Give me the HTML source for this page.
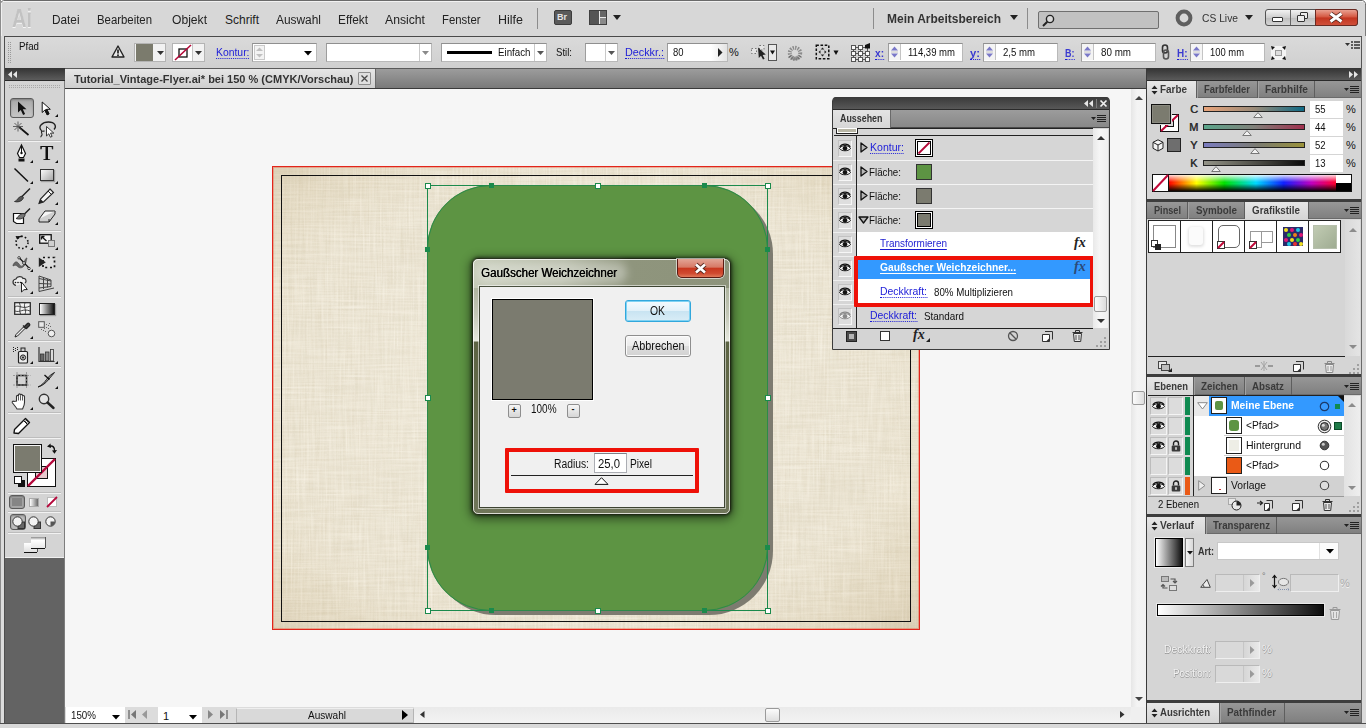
<!DOCTYPE html>
<html lang="de">
<head>
<meta charset="utf-8">
<title>Tutorial_Vintage-Flyer.ai</title>
<style>
*{box-sizing:border-box;margin:0;padding:0}
html,body{width:1366px;height:728px;overflow:hidden;background:#d6d6d6;font-family:"Liberation Sans","DejaVu Sans",sans-serif;font-size:11px;color:#111}
.a{position:absolute}
.t{position:absolute;white-space:nowrap;line-height:1}
.lnk{color:#1c1cd8;border-bottom:1px dotted #1c1cd8}
svg{position:absolute;overflow:visible}
/* ---------- frame ---------- */
#menubar{left:0;top:0;width:1366px;height:36px;background:#d7d7d7}
#ctrlbar{left:5px;top:36px;width:1357px;height:33px;background:linear-gradient(#dadada,#cfcfcf);border-top:1px solid #4a4a4a;border-right:1px solid #555}
.menu{top:14px;font-size:12px;color:#222}
.inp{position:absolute;background:#fff;border:1px solid #b9b9b9;border-top-color:#8f8f8f;border-left-color:#9d9d9d}
/* ---------- canvas ---------- */
#canvas{left:65px;top:89px;width:1066px;height:618px;background:#f6f6f6}

.tabbar{position:absolute;left:1147px;width:214px;height:17px;background:linear-gradient(#979797,#808080);border-bottom:1px solid #6a6a6a}
.tab{position:absolute;top:0;height:17px;border-right:1px solid #5e5e5e;border-left:1px solid #a2a2a2}
.tab.on{background:linear-gradient(#e6e6e6,#d5d5d5);height:18px;border-left:none}
.tl{position:absolute;white-space:nowrap;line-height:1;font-size:11px;font-weight:bold;color:#3a3a3a;top:3px}
.pbody{position:absolute;left:1147px;width:214px;background:#d5d5d5}
.sep{position:absolute;left:1147px;width:214px;height:3px;background:#3d3d3d}
/* MORE-CSS */
</style>
</head>
<body>
<!-- window frame -->
<div class="a" id="menubar"></div>
<div class="a" id="ctrlbar"></div>
<div class="a" id="canvas"></div>

<!-- ===== menu bar ===== -->
<div class="t" style="transform:scaleX(0.769);transform-origin:0 50%;left:12px;top:5px;font-size:26px;font-weight:bold;color:#c2c2c2;text-shadow:0 1px 0 #f6f6f6">Ai</div>
<div class="t menu" style="transform:scaleX(0.982);transform-origin:0 50%;left:52px">Datei</div>
<div class="t menu" style="transform:scaleX(0.948);transform-origin:0 50%;left:97px">Bearbeiten</div>
<div class="t menu" style="transform:scaleX(1.009);transform-origin:0 50%;left:172px">Objekt</div>
<div class="t menu" style="transform:scaleX(1.000);transform-origin:0 50%;left:225px">Schrift</div>
<div class="t menu" style="transform:scaleX(0.992);transform-origin:0 50%;left:276px">Auswahl</div>
<div class="t menu" style="transform:scaleX(0.985);transform-origin:0 50%;left:338px">Effekt</div>
<div class="t menu" style="transform:scaleX(1.016);transform-origin:0 50%;left:385px">Ansicht</div>
<div class="t menu" style="transform:scaleX(0.946);transform-origin:0 50%;left:442px">Fenster</div>
<div class="t menu" style="transform:scaleX(1.041);transform-origin:0 50%;left:498px">Hilfe</div>
<div class="a" style="left:537px;top:8px;width:1px;height:21px;background:#8c8c8c"></div>
<div class="a" style="left:554px;top:10px;width:18px;height:15px;background:#5a5a5a;border:1px solid #3c3c3c;border-radius:2px"></div>
<div class="t" style="left:557px;top:13px;font-size:9px;font-weight:bold;color:#e4e4e4">Br</div>
<div class="a" style="left:589px;top:10px;width:18px;height:15px;background:#e9e9e9;border:1px solid #3f3f3f"></div>
<div class="a" style="left:590px;top:11px;width:9px;height:13px;background:#555"></div>
<div class="a" style="left:600px;top:11px;width:6px;height:6px;background:#666"></div>
<div class="a" style="left:600px;top:18px;width:6px;height:6px;background:#8a8a8a"></div>
<svg style="left:613px;top:15px" width="8" height="5"><path d="M0 0h8l-4 5z" fill="#222"/></svg>
<div class="a" style="left:873px;top:8px;width:1px;height:21px;background:#8c8c8c"></div>
<div class="t" style="transform:scaleX(0.921);transform-origin:0 50%;left:887px;top:12px;font-size:13px;font-weight:bold;color:#333">Mein Arbeitsbereich</div>
<svg style="left:1010px;top:15px" width="8" height="5"><path d="M0 0h8l-4 5z" fill="#222"/></svg>
<div class="a" style="left:1027px;top:8px;width:1px;height:21px;background:#8c8c8c"></div>
<div class="a" style="left:1038px;top:11px;width:121px;height:18px;background:#c1c1c1;border:1px solid #6f6f6f;border-radius:2px"></div>
<svg style="left:1042px;top:14px" width="14" height="13"><circle cx="8" cy="5" r="3.6" fill="#d8d8d8" stroke="#222" stroke-width="1.4"/><path d="M5.3 7.8L1 12" stroke="#222" stroke-width="2"/></svg>
<svg style="left:1175px;top:9px" width="18" height="18"><circle cx="9" cy="9" r="6.4" fill="none" stroke="#5e5e5e" stroke-width="4"/></svg>
<div class="t" style="transform:scaleX(0.894);transform-origin:0 50%;left:1202px;top:13px;font-size:11.500px;color:#333">CS Live</div>
<svg style="left:1245px;top:15px" width="8" height="5"><path d="M0 0h8l-4 5z" fill="#222"/></svg>
<!-- window buttons -->
<div class="a" style="left:1265px;top:9px;width:93px;height:17px;border:1px solid #525252;border-radius:3px;background:linear-gradient(#f2f2f2,#cfcfcf 50%,#bdbdbd 51%,#d4d4d4)"></div>
<div class="a" style="left:1290px;top:10px;width:1px;height:15px;background:#666"></div>
<div class="a" style="left:1315px;top:9px;width:43px;height:17px;border:1px solid #6a2a22;border-radius:0 3px 3px 0;background:linear-gradient(#e9a090,#d4553f 48%,#c23520 52%,#d0503a)"></div>
<div class="a" style="left:1272px;top:17px;width:11px;height:5px;background:#fff;border:1px solid #333;border-radius:1px"></div>
<div class="a" style="left:1300px;top:12px;width:8px;height:7px;border:1.5px solid #333;background:#eee;border-radius:1px"></div>
<div class="a" style="left:1297px;top:15px;width:8px;height:7px;border:1.5px solid #333;background:#eee;border-radius:1px"></div>
<svg style="left:1329px;top:12px" width="14" height="11"><path d="M1.5 1.5l11 8M12.5 1.5l-11 8" stroke="#4a2018" stroke-width="4.6"/><path d="M1.5 1.5l11 8M12.5 1.5l-11 8" stroke="#fff" stroke-width="2.8"/></svg>

<!-- ===== control bar ===== -->
<svg style="left:8px;top:42px" width="4" height="22"><g fill="#9a9a9a"><rect x="0" y="0" width="1" height="1"/><rect x="2" y="0" width="1" height="1"/><rect x="0" y="2" width="1" height="1"/><rect x="2" y="2" width="1" height="1"/><rect x="0" y="4" width="1" height="1"/><rect x="2" y="4" width="1" height="1"/><rect x="0" y="6" width="1" height="1"/><rect x="2" y="6" width="1" height="1"/><rect x="0" y="8" width="1" height="1"/><rect x="2" y="8" width="1" height="1"/><rect x="0" y="10" width="1" height="1"/><rect x="2" y="10" width="1" height="1"/><rect x="0" y="12" width="1" height="1"/><rect x="2" y="12" width="1" height="1"/><rect x="0" y="14" width="1" height="1"/><rect x="2" y="14" width="1" height="1"/><rect x="0" y="16" width="1" height="1"/><rect x="2" y="16" width="1" height="1"/><rect x="0" y="18" width="1" height="1"/><rect x="2" y="18" width="1" height="1"/><rect x="0" y="20" width="1" height="1"/><rect x="2" y="20" width="1" height="1"/></g></svg>
<div class="t" style="transform:scaleX(0.883);transform-origin:0 50%;left:19px;top:41px;font-size:11px">Pfad</div>
<svg style="left:111px;top:45px" width="14" height="13"><path d="M7 1L13 12H1z" fill="#e8e8e8" stroke="#222" stroke-width="1.4" stroke-linejoin="round"/><path d="M7 4.5v4" stroke="#111" stroke-width="1.6"/><circle cx="7" cy="10.2" r=".9" fill="#111"/></svg>
<div class="a" style="left:134px;top:43px;width:32px;height:19px;background:#f2f2f2;border:1px solid #b4b4b4"></div>
<div class="a" style="left:136px;top:44px;width:17px;height:17px;background:#7b7b6d"></div>
<svg style="left:157px;top:51px" width="7" height="4"><path d="M0 0h7l-3.500 4z" fill="#333"/></svg>
<div class="a" style="left:172px;top:43px;width:33px;height:19px;background:#f2f2f2;border:1px solid #b4b4b4"></div>
<div class="a" style="left:173px;top:44px;width:19px;height:17px;background:#fff"></div>
<svg style="left:174px;top:44px" width="18" height="17"><rect x="5" y="5" width="8" height="8" fill="none" stroke="#111" stroke-width="1.3"/><path d="M1 16L17 1" stroke="#b30838" stroke-width="1.6"/></svg>
<div class="a" style="left:192px;top:44px;width:1px;height:17px;background:#c4c4c4"></div>
<svg style="left:195px;top:51px" width="7" height="4"><path d="M0 0h7l-3.500 4z" fill="#333"/></svg>
<div class="t lnk" style="transform:scaleX(0.944);transform-origin:0 50%;left:216px;top:47px;font-size:11px">Kontur:</div>
<div class="inp" style="left:252px;top:43px;width:65px;height:19px"></div>
<div class="a" style="left:254px;top:45px;width:11px;height:15px;border:1px solid #c9c9c9;background:#f3f3f3"></div>
<svg style="left:256px;top:47px" width="7" height="11"><path d="M0 4h7l-3.500-3.500z" fill="#c0c0c0"/><path d="M0 7h7l-3.500 3.500z" fill="#c0c0c0"/></svg>
<svg style="left:304px;top:51px" width="8" height="5"><path d="M0 0h8l-4 4.500z" fill="#000"/></svg>
<div class="inp" style="left:326px;top:43px;width:106px;height:19px"></div>
<div class="a" style="left:419px;top:44px;width:1px;height:17px;background:#c9c9c9"></div>
<svg style="left:422px;top:51px" width="7" height="4"><path d="M0 0h7l-3.500 4z" fill="#8a8a8a"/></svg>
<div class="inp" style="left:441px;top:43px;width:106px;height:19px"></div>
<div class="a" style="left:447px;top:51px;width:45px;height:3px;background:#000"></div>
<div class="t" style="transform:scaleX(0.885);transform-origin:0 50%;left:498px;top:47px;font-size:11px">Einfach</div>
<div class="a" style="left:534px;top:44px;width:1px;height:17px;background:#c9c9c9"></div>
<svg style="left:537px;top:51px" width="7" height="4"><path d="M0 0h7l-3.500 4z" fill="#555"/></svg>
<div class="t" style="transform:scaleX(0.872);transform-origin:0 50%;left:556px;top:47px;font-size:11px">Stil:</div>
<div class="inp" style="left:585px;top:43px;width:33px;height:19px"></div>
<div class="a" style="left:605px;top:44px;width:1px;height:17px;background:#c9c9c9"></div>
<svg style="left:608px;top:51px" width="7" height="4"><path d="M0 0h7l-3.500 4z" fill="#555"/></svg>
<div class="t lnk" style="transform:scaleX(0.982);transform-origin:0 50%;left:625px;top:47px;font-size:11px">Deckkr.:</div>
<div class="inp" style="left:667px;top:43px;width:61px;height:19px"></div>
<div class="t" style="transform:scaleX(0.857);transform-origin:0 50%;left:673px;top:47px;font-size:11px">80</div>
<div class="a" style="left:711px;top:44px;width:16px;height:17px;background:linear-gradient(90deg,#fff,#e4e4e4)"></div>
<svg style="left:718px;top:48px" width="5" height="9"><path d="M0 0v9l4.500-4.500z" fill="#222"/></svg>
<div class="t" style="left:729px;top:47px;font-size:11px">%</div>
<!-- select similar icon -->
<svg style="left:750px;top:44px" width="28" height="18"><rect x="1.500" y="4.500" width="5" height="5" fill="#e4e4e4" stroke="#777" stroke-dasharray="1.500 2" /><rect x="9.500" y="1.500" width="4.500" height="4.500" fill="#e4e4e4" stroke="#777" stroke-dasharray="1.500 2"/><path d="M8 3.500l.8 10.500 2.200-2.300 2 3.800 1.600-.8-2-3.800 3.200-.3z" fill="#222"/><rect x="18.500" y=".5" width="8" height="16" fill="#e9e9e9" stroke="#555"/><path d="M20 6.500h5l-2.500 4z" fill="#111"/></svg>
<svg style="left:787px;top:45px" width="16" height="16"><circle cx="8" cy="8" r="5.200" fill="none" stroke="#8a8a8a" stroke-width="4" stroke-dasharray="1.300 1.100"/><circle cx="8" cy="8" r="3" fill="#d9d9d9"/><path d="M2.500 11a6.500 6.500 0 0 0 11 0" fill="none" stroke="#5a5a5a" stroke-width="3.500" stroke-dasharray="1.300 1.100" opacity=".7"/></svg>
<svg style="left:815px;top:44px" width="26" height="18"><rect x="1.300" y="1.300" width="12.500" height="13.500" fill="#d4d4d4" stroke="#111" stroke-width="1.500" stroke-dasharray="2.600 1.600"/><path d="M7.500 3.500l1.800 2h-3.600zM7.500 12.500l1.800-2h-3.600zM3.500 8l2-1.800v3.600zM11.500 8l-2-1.800v3.600z" fill="#222"/><path d="M18.500 6.500h5l-2.500 4.500z" fill="#111"/></svg>
<svg style="left:851px;top:43px" width="20" height="19"><path d="M2.500 4.500h14M2.500 10.500h14M2.500 16.500h14M2.500 4.500v12M9.500 4.500v12M16.500 4.500v12" stroke="#555" stroke-width="1" fill="none"/><g fill="#fafafa" stroke="#555" stroke-width="1"><rect x=".5" y="2.500" width="4" height="4"/><rect x="7.500" y="2.500" width="4" height="4"/><rect x=".5" y="8.500" width="4" height="4"/><rect x="7.500" y="8.500" width="4" height="4"/><rect x="14.500" y="8.500" width="4" height="4"/><rect x=".5" y="14.500" width="4" height="4"/><rect x="7.500" y="14.500" width="4" height="4"/><rect x="14.500" y="14.500" width="4" height="4"/></g><path d="M14 2l5-2v5.500h-5z" fill="#111"/></svg>
<div class="t lnk" style="transform:scaleX(0.920);transform-origin:0 50%;left:875px;top:48px;font-size:11px;font-weight:bold;color:#3a3ad0">x:</div>
<div class="inp" style="left:888px;top:43px;width:75px;height:19px"></div>
<div class="a" style="left:889px;top:44px;width:12px;height:16px;border-right:1px solid #c4c4c4;background:#f4f4f4"></div>
<svg style="left:891px;top:46px" width="8" height="12"><path d="M0 4.5h7l-3.5-4z" fill="#7a78c8"/><path d="M0 7.5h7l-3.5 4z" fill="#7a78c8"/><path d="M0 6h7" stroke="#aaa" stroke-width=".6"/></svg>
<div class="t" style="transform:scaleX(0.867);transform-origin:0 50%;left:908px;top:47px;font-size:11px">114,39 mm</div>
<div class="t lnk" style="transform:scaleX(1.022);transform-origin:0 50%;left:970px;top:48px;font-size:11px;font-weight:bold;color:#3a3ad0">y:</div>
<div class="inp" style="left:983px;top:43px;width:75px;height:19px"></div>
<div class="a" style="left:984px;top:44px;width:12px;height:16px;border-right:1px solid #c4c4c4;background:#f4f4f4"></div>
<svg style="left:986px;top:46px" width="8" height="12"><path d="M0 4.5h7l-3.5-4z" fill="#7a78c8"/><path d="M0 7.5h7l-3.5 4z" fill="#7a78c8"/><path d="M0 6h7" stroke="#aaa" stroke-width=".6"/></svg>
<div class="t" style="transform:scaleX(0.872);transform-origin:0 50%;left:1003px;top:47px;font-size:11px">2,5 mm</div>
<div class="t lnk" style="transform:scaleX(0.818);transform-origin:0 50%;left:1065px;top:48px;font-size:11px;font-weight:bold;color:#3a3ad0">B:</div>
<div class="inp" style="left:1081px;top:43px;width:75px;height:19px"></div>
<div class="a" style="left:1082px;top:44px;width:12px;height:16px;border-right:1px solid #c4c4c4;background:#f4f4f4"></div>
<svg style="left:1084px;top:46px" width="8" height="12"><path d="M0 4.5h7l-3.5-4z" fill="#7a78c8"/><path d="M0 7.5h7l-3.5 4z" fill="#7a78c8"/><path d="M0 6h7" stroke="#aaa" stroke-width=".6"/></svg>
<div class="t" style="transform:scaleX(0.892);transform-origin:0 50%;left:1101px;top:47px;font-size:11px">80 mm</div>
<svg style="left:1161px;top:44px" width="9" height="16"><rect x="1.500" y="1" width="5" height="8" rx="2.500" fill="none" stroke="#333" stroke-width="1.600"/><rect x="2.500" y="6" width="5" height="9" rx="2.500" fill="none" stroke="#555" stroke-width="1.600"/></svg>
<div class="t lnk" style="transform:scaleX(0.904);transform-origin:0 50%;left:1177px;top:48px;font-size:11px;font-weight:bold;color:#3a3ad0">H:</div>
<div class="inp" style="left:1190px;top:43px;width:75px;height:19px"></div>
<div class="a" style="left:1191px;top:44px;width:12px;height:16px;border-right:1px solid #c4c4c4;background:#f4f4f4"></div>
<svg style="left:1193px;top:46px" width="8" height="12"><path d="M0 4.5h7l-3.5-4z" fill="#7a78c8"/><path d="M0 7.5h7l-3.5 4z" fill="#7a78c8"/><path d="M0 6h7" stroke="#aaa" stroke-width=".6"/></svg>
<div class="t" style="transform:scaleX(0.855);transform-origin:0 50%;left:1210px;top:47px;font-size:11px">100 mm</div>
<svg style="left:1271px;top:46px" width="15" height="14"><rect x="0" y="0" width="15" height="14" fill="#f3f3f3"/><rect x="4.500" y="4.500" width="6" height="5" fill="#ddd" stroke="#999"/><path d="M0 0l4 1-3 3zM15 0l-4 1 3 3zM0 14l4-1-3-3zM15 14l-4-1 3-3z" fill="#111"/></svg>
<svg style="left:1345px;top:41px" width="15" height="8"><path d="M0 2h5l-2.500 3z" fill="#333"/><path d="M6 1h2M6 4h2M6 7h2" stroke="#333" stroke-width="1.400"/><path d="M9 1h6M9 4h6M9 7h6" stroke="#333" stroke-width="1.400"/></svg>

<!-- ===== window frame edges ===== -->
<div class="a" style="left:0;top:0;width:1366px;height:1px;background:#6a6a6a"></div>
<div class="a" style="left:1px;top:1px;width:1364px;height:1px;background:#f2f2f2"></div>
<div class="a" style="left:1px;top:1px;width:1px;height:727px;background:#f0f0f0"></div>
<svg style="left:0;top:0" width="6" height="6"><path d="M0 0h6v1h-2l-2 1-1 2v2h-1z" fill="#fff"/><path d="M.5 6v-2.500l1-2 2-1h2.500" fill="none" stroke="#6a6a6a"/></svg>
<svg style="left:1360px;top:0" width="6" height="6"><path d="M6 0h-6v1h2l2 1 1 2v2h1z" fill="#fff"/><path d="M5.500 6v-2.500l-1-2-2-1h-2.500" fill="none" stroke="#6a6a6a"/></svg>
<div class="a" style="left:1365px;top:5px;width:1px;height:723px;background:#7a7a7a"></div>
<div class="a" style="left:0;top:0;width:1px;height:728px;background:#8c8c8c"></div>
<div class="a" style="left:1px;top:36px;width:3px;height:692px;background:#dcdcdc"></div>
<div class="a" style="left:4px;top:36px;width:1px;height:688px;background:#4e4e4e"></div>
<div class="a" style="left:1362px;top:36px;width:4px;height:692px;background:#dadada"></div>
<div class="a" style="left:0;top:723px;width:1366px;height:1px;background:#4e4e4e"></div>
<div class="a" style="left:0;top:724px;width:1366px;height:4px;background:#d9d9d9"></div>
<!-- ===== document tab bar ===== -->
<div class="a" style="left:65px;top:68px;width:1081px;height:21px;background:linear-gradient(#9c9c9c,#7a7a7a);border-top:1px solid #5a5a5a;border-bottom:1px solid #3a3a3a"></div>
<div class="a" style="left:65px;top:69px;width:311px;height:19px;background:linear-gradient(#e6e6e6,#cfcfcf);border-right:1px solid #6a6a6a"></div>
<div class="t" style="transform:scaleX(0.957);transform-origin:0 50%;left:74px;top:74px;font-size:11.500px;font-weight:bold;color:#333">Tutorial_Vintage-Flyer.ai* bei 150 % (CMYK/Vorschau)</div>
<div class="a" style="left:358px;top:72px;width:13px;height:13px;border:1px solid #8e8e8e;background:#e0e0e0;border-radius:1px"></div>
<svg style="left:361px;top:75px" width="7" height="7"><path d="M.5.5l6 6M6.500.5l-6 6" stroke="#4a4a4a" stroke-width="1.300"/></svg>
<!-- ===== tools panel shell ===== -->
<div class="a" style="left:5px;top:68px;width:60px;height:13px;background:linear-gradient(#333,#5c5c5c);border-bottom:1px solid #2a2a2a"></div>
<svg style="left:8px;top:71px" width="9" height="7"><path d="M4 0v7l-4-3.500zM9 0v7l-4-3.500z" fill="#e6e6e6"/></svg>
<div class="a" style="left:5px;top:81px;width:60px;height:477px;background:#d4d4d4;border-bottom:1px solid #f0f0f0"></div>
<div class="a" style="left:5px;top:558px;width:60px;height:165px;background:#636363"></div>
<div class="a" style="left:64px;top:81px;width:1px;height:642px;background:#7d7d7d"></div>
<!-- ===== status bar ===== -->
<div class="a" style="left:65px;top:707px;width:1081px;height:16px;background:#dcdcdc"></div>
<div class="a" style="left:66px;top:707px;width:59px;height:16px;background:#fff"></div>
<div class="t" style="transform:scaleX(0.888);transform-origin:0 50%;left:71px;top:710px;font-size:11px">150%</div>
<svg style="left:112px;top:715px" width="8" height="5"><path d="M0 0h8l-4 4.500z" fill="#000"/></svg>
<svg style="left:128px;top:710px" width="9" height="9"><path d="M1 0v9" stroke="#777" stroke-width="1.500"/><path d="M8 0v9l-5-4.500z" fill="#777"/></svg>
<svg style="left:142px;top:710px" width="6" height="9"><path d="M5 0v9l-5-4.500z" fill="#999"/></svg>
<div class="a" style="left:158px;top:707px;width:44px;height:16px;background:#fff"></div>
<div class="t" style="left:163px;top:711px;font-size:11px">1</div>
<svg style="left:189px;top:715px" width="8" height="5"><path d="M0 0h8l-4 4.500z" fill="#000"/></svg>
<svg style="left:208px;top:710px" width="6" height="9"><path d="M0 0v9l5-4.500z" fill="#888"/></svg>
<svg style="left:220px;top:710px" width="9" height="9"><path d="M7 0v9" stroke="#777" stroke-width="1.500"/><path d="M0 0v9l5-4.500z" fill="#777"/></svg>
<div class="a" style="left:236px;top:708px;width:178px;height:15px;background:#d9d9d9;border:1px solid #b5b5b5;border-top-color:#efefef"></div>
<div class="t" style="transform:scaleX(0.914);transform-origin:0 50%;left:308px;top:710px;font-size:11px">Auswahl</div>
<svg style="left:402px;top:710px" width="6" height="10"><path d="M0 0v10l6-5z" fill="#000"/></svg>
<div class="a" style="left:414px;top:707px;width:717px;height:16px;background:linear-gradient(#eaeaea,#f3f3f3)"></div>
<svg style="left:420px;top:711px" width="5" height="7"><path d="M4.500 0v7l-4.500-3.500z" fill="#333"/></svg>
<svg style="left:1120px;top:711px" width="5" height="7"><path d="M0 0v7l4.500-3.500z" fill="#333"/></svg>
<div class="a" style="left:765px;top:708px;width:15px;height:14px;background:linear-gradient(#fbfbfb,#dedede);border:1px solid #9a9a9a;border-radius:2px"></div>
<!-- vertical scrollbar -->
<div class="a" style="left:1131px;top:89px;width:15px;height:618px;background:linear-gradient(90deg,#e6e6e6,#f4f4f4 40%,#f1f1f1)"></div>
<svg style="left:1135px;top:96px" width="8" height="4"><path d="M0 4h8l-4-4z" fill="#444"/></svg>
<svg style="left:1135px;top:697px" width="8" height="4"><path d="M0 0h8l-4 4z" fill="#444"/></svg>
<div class="a" style="left:1132px;top:391px;width:13px;height:14px;background:linear-gradient(90deg,#fbfbfb,#dedede);border:1px solid #9a9a9a;border-radius:2px"></div>
<div class="a" style="left:1131px;top:707px;width:15px;height:16px;background:#efefef"></div>
<div class="a" style="left:1146px;top:68px;width:1px;height:655px;background:#3a3a3a"></div>

<!-- ===== artboard ===== -->
<div class="a" id="art" style="left:272px;top:166px;width:648px;height:464px;border:1px solid #e2251b;background:#f2ebdb;overflow:hidden">
<svg style="left:0;top:0" width="646" height="462"><defs>
<filter id="lin" x="0" y="0" width="100%" height="100%"><feTurbulence type="fractalNoise" baseFrequency="0.02 0.55" numOctaves="2" seed="3" result="h"/><feTurbulence type="fractalNoise" baseFrequency="0.55 0.02" numOctaves="2" seed="7" result="v"/><feBlend in="h" in2="v" mode="multiply"/><feColorMatrix type="matrix" values="0 0 0 0 0.45  0 0 0 0 0.38  0 0 0 0 0.22  1.6 1.6 0 0 -0.62"/></filter>
<filter id="lin2" x="0" y="0" width="100%" height="100%"><feTurbulence type="fractalNoise" baseFrequency="0.03 0.5" numOctaves="1" seed="11" result="h"/><feTurbulence type="fractalNoise" baseFrequency="0.5 0.03" numOctaves="1" seed="5" result="v"/><feBlend in="h" in2="v" mode="screen"/><feColorMatrix type="matrix" values="0 0 0 0 1  0 0 0 0 0.99  0 0 0 0 0.93  1.5 1.5 0 0 -1.25"/></filter>
<radialGradient id="vig" cx="48%" cy="50%" r="72%"><stop offset="0" stop-color="#fffdf4" stop-opacity=".25"/><stop offset=".6" stop-color="#fffdf4" stop-opacity="0"/><stop offset=".8" stop-color="#b89c62" stop-opacity=".08"/><stop offset="1" stop-color="#a88c5a" stop-opacity=".24"/></radialGradient></defs>
<rect width="646" height="462" filter="url(#lin)" opacity=".24"/><rect width="646" height="462" filter="url(#lin2)" opacity=".3"/><rect width="646" height="462" fill="url(#vig)"/></svg></div>
<div class="a" style="left:273px;top:167px;width:646px;height:462px;border:1px solid rgba(235,70,40,.35)"></div>
<div class="a" style="left:281px;top:175px;width:630px;height:447px;border:1px solid #111"></div>
<!-- drop shadow + green shape -->
<div class="a" style="left:432px;top:190px;width:341px;height:425px;border-radius:64px;background:#7d7b70"></div>
<div class="a" style="left:427px;top:185px;width:341px;height:426px;border-radius:64px;background:#5d9443"></div>
<div class="a" style="left:427px;top:185px;width:341px;height:426px;border:1px solid #1b8a4c"></div>
<div class="a" style="left:427px;top:185px;width:341px;height:426px;border-radius:64px;border:1px solid #2c8a4a"></div>
<div class="a" style="left:425px;top:183px;width:6px;height:6px;background:#fff;border:1px solid #1b8a4c"></div><div class="a" style="left:595px;top:183px;width:6px;height:6px;background:#fff;border:1px solid #1b8a4c"></div><div class="a" style="left:765px;top:183px;width:6px;height:6px;background:#fff;border:1px solid #1b8a4c"></div><div class="a" style="left:425px;top:395px;width:6px;height:6px;background:#fff;border:1px solid #1b8a4c"></div><div class="a" style="left:765px;top:395px;width:6px;height:6px;background:#fff;border:1px solid #1b8a4c"></div><div class="a" style="left:425px;top:608px;width:6px;height:6px;background:#fff;border:1px solid #1b8a4c"></div><div class="a" style="left:595px;top:608px;width:6px;height:6px;background:#fff;border:1px solid #1b8a4c"></div><div class="a" style="left:765px;top:608px;width:6px;height:6px;background:#fff;border:1px solid #1b8a4c"></div><div class="a" style="left:489px;top:183px;width:5px;height:5px;background:#1b8a4c"></div><div class="a" style="left:702px;top:183px;width:5px;height:5px;background:#1b8a4c"></div><div class="a" style="left:425px;top:247px;width:5px;height:5px;background:#1b8a4c"></div><div class="a" style="left:765px;top:247px;width:5px;height:5px;background:#1b8a4c"></div><div class="a" style="left:425px;top:545px;width:5px;height:5px;background:#1b8a4c"></div><div class="a" style="left:765px;top:545px;width:5px;height:5px;background:#1b8a4c"></div><div class="a" style="left:489px;top:608px;width:5px;height:5px;background:#1b8a4c"></div><div class="a" style="left:702px;top:608px;width:5px;height:5px;background:#1b8a4c"></div>

<!-- ===== Gaussian blur dialog ===== -->
<div class="a" style="left:472px;top:258px;width:259px;height:257px;border-radius:7px;box-shadow:0 2px 10px 3px rgba(0,0,0,.42),0 0 3px 1px rgba(0,0,0,.5)"></div>
<div class="a" style="left:472px;top:258px;width:259px;height:257px;border-radius:6px;border:1px solid #1f2a14;background:linear-gradient(100deg,#c6cbb9 0%,#b6bba8 35%,#8f957d 60%,#8d937b 100%) 0 0/100% 29px no-repeat,linear-gradient(#aeb49f 0,#aeb49f 29px,#c3c7b7 55px,#e6e8de 82px,#5c6343 83px,#666c4c 60%,#70765a 100%)"></div>
<div class="a" style="left:473px;top:259px;width:257px;height:255px;border-radius:5px;border:1px solid rgba(255,255,255,.75)"></div>
<div class="a" style="left:479px;top:286px;width:246px;height:222px;border:1px solid #3d4432;background:#f0f0f0;box-shadow:0 0 0 1px rgba(255,255,255,.55)"></div>
<div class="a" style="left:477px;top:263px;width:150px;height:20px;border-radius:9px;background:rgba(255,255,255,.32);filter:blur(4px)"></div>
<div class="t" style="transform:scaleX(0.963);transform-origin:0 50%;left:481px;top:267px;font-size:12px;color:#000;text-shadow:.3px 0 0 #000">Gaußscher Weichzeichner</div>
<div class="a" style="left:677px;top:259px;width:47px;height:19px;border:1px solid #5a1a12;border-top:none;border-radius:0 0 5px 5px;box-shadow:0 0 0 1px rgba(255,255,255,.6);background:linear-gradient(#e3a596 0,#d77a66 45%,#c8381f 52%,#d04a30 80%,#e07858 100%)"></div>
<svg style="left:694px;top:263px" width="13" height="11"><path d="M2 1.500l9 8M11 1.500l-9 8" stroke="#5a2a20" stroke-width="4.400"/><path d="M2 1.500l9 8M11 1.500l-9 8" stroke="#fff" stroke-width="2.600"/></svg>
<div class="a" style="left:491px;top:298px;width:103px;height:103px;border:1px solid #fff"></div>
<div class="a" style="left:492px;top:299px;width:101px;height:101px;border:1px solid #000;background:#7b7b6f"></div>
<div class="a" style="left:625px;top:300px;width:66px;height:22px;border:1px solid #31a7dc;border-radius:3px;background:linear-gradient(#f4fbfe 0,#e2f1f9 48%,#c9e4f2 52%,#d9edf7 100%);box-shadow:inset 0 0 0 1px #7fd2f3"></div>
<div class="t" style="transform:scaleX(0.865);transform-origin:0 50%;left:650px;top:305px;font-size:12px">OK</div>
<div class="a" style="left:625px;top:335px;width:66px;height:22px;border:1px solid #8e8e8e;border-radius:3px;background:linear-gradient(#f6f6f6 0,#ececec 48%,#dddddd 52%,#d2d2d2 100%);box-shadow:inset 0 0 0 1px #fcfcfc"></div>
<div class="t" style="transform:scaleX(0.904);transform-origin:0 50%;left:632px;top:340px;font-size:12px">Abbrechen</div>
<div class="a" style="left:508px;top:404px;width:13px;height:14px;border:1px solid #8e8e8e;border-radius:2px;background:linear-gradient(#f6f6f6,#d6d6d6)"></div>
<div class="t" style="left:511.500px;top:406px;font-size:9px;font-weight:bold">+</div>
<div class="t" style="transform:scaleX(0.831);transform-origin:0 50%;left:531px;top:403px;font-size:12px">100%</div>
<div class="a" style="left:567px;top:404px;width:13px;height:14px;border:1px solid #8e8e8e;border-radius:2px;background:linear-gradient(#f6f6f6,#d6d6d6)"></div>
<div class="t" style="left:571.500px;top:405px;font-size:9px;font-weight:bold">-</div>
<div class="a" style="left:505px;top:448px;width:194px;height:45px;border:4px solid #ee1108;border-radius:1px"></div>
<div class="t" style="transform:scaleX(0.860);transform-origin:0 50%;left:554px;top:458px;font-size:12px">Radius:</div>
<div class="a" style="left:594px;top:453px;width:33px;height:20px;border:1px solid #abadb3;border-top-color:#7d8088;background:#fff"></div>
<div class="t" style="transform:scaleX(0.942);transform-origin:0 50%;left:598px;top:458px;font-size:12px">25,0</div>
<div class="t" style="transform:scaleX(0.846);transform-origin:0 50%;left:630px;top:458px;font-size:12px">Pixel</div>
<div class="a" style="left:511px;top:475px;width:182px;height:1px;background:#222"></div>
<svg style="left:594px;top:477px" width="15" height="8"><path d="M7.500.7L14 7.400H1z" fill="#fff" stroke="#111" stroke-width="1"/></svg>

<!-- ===== Aussehen panel ===== -->
<div class="a" style="left:832px;top:97px;width:278px;height:253px;background:#d5d5d5;border:1px solid #3c3c3c;border-radius:4px 4px 0 0"></div>
<div class="a" style="left:833px;top:97px;width:276px;height:13px;background:linear-gradient(#3a3a3a,#585858);border-radius:3px 3px 0 0;border-bottom:1px solid #2b2b2b"></div>
<svg style="left:1084px;top:100px" width="9" height="7"><path d="M4 0v7l-4-3.500zM9 0v7l-4-3.500z" fill="#e6e6e6"/></svg>
<div class="a" style="left:1096px;top:99px;width:1px;height:9px;background:#7d7d7d"></div>
<svg style="left:1100px;top:100px" width="7" height="7"><path d="M.5.5l6 6M6.500.5l-6 6" stroke="#f0f0f0" stroke-width="1.700"/></svg>
<div class="a" style="left:833px;top:110px;width:276px;height:18px;background:linear-gradient(#9c9c9c,#888888);border-bottom:1px solid #4a4a4a"></div>
<div class="a" style="left:833px;top:110px;width:58px;height:18px;background:linear-gradient(#e4e4e4,#d6d6d6);border-right:1px solid #6a6a6a"></div>
<div class="t" style="transform:scaleX(0.808);transform-origin:0 50%;left:840px;top:113px;font-size:11px;font-weight:bold;color:#333">Aussehen</div>
<svg style="left:1091px;top:114px" width="15" height="9"><path d="M0 3h5l-2.500 3z" fill="#222"/><path d="M6 1.500h9M6 3.500h9M6 5.500h9M6 7.500h9" stroke="#222" stroke-width="1"/></svg>
<!-- list -->
<div class="a" style="left:833px;top:128px;width:260px;height:200px;background:#d6d6d6"></div>
<div class="a" style="left:833px;top:128px;width:260px;height:1px;background:#222"></div>
<div class="a" style="left:836px;top:128px;width:22px;height:6px;background:#fff;border:1px solid #222;border-top:none"></div>
<div class="a" style="left:838px;top:129px;width:18px;height:3px;background:#b9b7a6"></div>
<div class="a" style="left:834px;top:135px;width:259px;height:1px;background:#222"></div>
<div class="a" style="left:857px;top:160px;width:236px;height:1px;background:#f4f4f4"></div>
<div class="a" style="left:857px;top:184px;width:236px;height:1px;background:#f4f4f4"></div>
<div class="a" style="left:857px;top:208px;width:236px;height:1px;background:#f4f4f4"></div>
<div class="a" style="left:857px;top:232px;width:236px;height:72px;background:#fff"></div>
<div class="a" style="left:857px;top:304px;width:236px;height:24px;background:#d6d6d6"></div>
<div class="a" style="left:833px;top:160px;width:23px;height:1px;background:#eee"></div>
<div class="a" style="left:833px;top:184px;width:23px;height:1px;background:#eee"></div>
<div class="a" style="left:833px;top:208px;width:23px;height:1px;background:#eee"></div>
<div class="a" style="left:833px;top:232px;width:23px;height:1px;background:#eee"></div>
<div class="a" style="left:833px;top:256px;width:23px;height:1px;background:#eee"></div>
<div class="a" style="left:833px;top:280px;width:23px;height:1px;background:#eee"></div>
<div class="a" style="left:833px;top:304px;width:23px;height:1px;background:#eee"></div>
<div class="a" style="left:856px;top:135px;width:1px;height:193px;background:#222"></div>
<div class="a" style="left:838px;top:140px;width:14px;height:17px;background:#dedede;border:1px solid #c2c2c2;border-right-color:#f6f6f6;border-bottom-color:#f6f6f6"></div>
<svg style="left:839px;top:143px" width="12" height="10"><path d="M.5 5.500C2.500 1.500 9.500 1.500 11.500 5.500C9.500 8.500 2.500 8.500 .5 5.500z" fill="#f2f2f2" stroke="#111" stroke-width="1"/><circle cx="6" cy="5.200" r="2.300" fill="#111"/><path d="M.8 3.800C3 .3 9 .3 11.200 3.800" fill="none" stroke="#111" stroke-width="1.300"/></svg><div class="a" style="left:838px;top:164px;width:14px;height:17px;background:#dedede;border:1px solid #c2c2c2;border-right-color:#f6f6f6;border-bottom-color:#f6f6f6"></div>
<svg style="left:839px;top:167px" width="12" height="10"><path d="M.5 5.500C2.500 1.500 9.500 1.500 11.500 5.500C9.500 8.500 2.500 8.500 .5 5.500z" fill="#f2f2f2" stroke="#111" stroke-width="1"/><circle cx="6" cy="5.200" r="2.300" fill="#111"/><path d="M.8 3.800C3 .3 9 .3 11.200 3.800" fill="none" stroke="#111" stroke-width="1.300"/></svg><div class="a" style="left:838px;top:188px;width:14px;height:17px;background:#dedede;border:1px solid #c2c2c2;border-right-color:#f6f6f6;border-bottom-color:#f6f6f6"></div>
<svg style="left:839px;top:191px" width="12" height="10"><path d="M.5 5.500C2.500 1.500 9.500 1.500 11.500 5.500C9.500 8.500 2.500 8.500 .5 5.500z" fill="#f2f2f2" stroke="#111" stroke-width="1"/><circle cx="6" cy="5.200" r="2.300" fill="#111"/><path d="M.8 3.800C3 .3 9 .3 11.200 3.800" fill="none" stroke="#111" stroke-width="1.300"/></svg><div class="a" style="left:838px;top:212px;width:14px;height:17px;background:#dedede;border:1px solid #c2c2c2;border-right-color:#f6f6f6;border-bottom-color:#f6f6f6"></div>
<svg style="left:839px;top:215px" width="12" height="10"><path d="M.5 5.500C2.500 1.500 9.500 1.500 11.500 5.500C9.500 8.500 2.500 8.500 .5 5.500z" fill="#f2f2f2" stroke="#111" stroke-width="1"/><circle cx="6" cy="5.200" r="2.300" fill="#111"/><path d="M.8 3.800C3 .3 9 .3 11.200 3.800" fill="none" stroke="#111" stroke-width="1.300"/></svg><div class="a" style="left:838px;top:236px;width:14px;height:17px;background:#dedede;border:1px solid #c2c2c2;border-right-color:#f6f6f6;border-bottom-color:#f6f6f6"></div>
<svg style="left:839px;top:239px" width="12" height="10"><path d="M.5 5.500C2.500 1.500 9.500 1.500 11.500 5.500C9.500 8.500 2.500 8.500 .5 5.500z" fill="#f2f2f2" stroke="#111" stroke-width="1"/><circle cx="6" cy="5.200" r="2.300" fill="#111"/><path d="M.8 3.800C3 .3 9 .3 11.200 3.800" fill="none" stroke="#111" stroke-width="1.300"/></svg><div class="a" style="left:838px;top:260px;width:14px;height:17px;background:#dedede;border:1px solid #c2c2c2;border-right-color:#f6f6f6;border-bottom-color:#f6f6f6"></div>
<svg style="left:839px;top:263px" width="12" height="10"><path d="M.5 5.500C2.500 1.500 9.500 1.500 11.500 5.500C9.500 8.500 2.500 8.500 .5 5.500z" fill="#f2f2f2" stroke="#111" stroke-width="1"/><circle cx="6" cy="5.200" r="2.300" fill="#111"/><path d="M.8 3.800C3 .3 9 .3 11.200 3.800" fill="none" stroke="#111" stroke-width="1.300"/></svg><div class="a" style="left:838px;top:284px;width:14px;height:17px;background:#dedede;border:1px solid #c2c2c2;border-right-color:#f6f6f6;border-bottom-color:#f6f6f6"></div>
<svg style="left:839px;top:287px" width="12" height="10"><path d="M.5 5.500C2.500 1.500 9.500 1.500 11.500 5.500C9.500 8.500 2.500 8.500 .5 5.500z" fill="#f2f2f2" stroke="#111" stroke-width="1"/><circle cx="6" cy="5.200" r="2.300" fill="#111"/><path d="M.8 3.800C3 .3 9 .3 11.200 3.800" fill="none" stroke="#111" stroke-width="1.300"/></svg><div class="a" style="left:838px;top:308px;width:14px;height:17px;background:#dedede;border:1px solid #c2c2c2;border-right-color:#f6f6f6;border-bottom-color:#f6f6f6"></div>
<svg style="left:839px;top:311px" width="12" height="10"><path d="M.5 5.500C2.500 1.500 9.500 1.500 11.500 5.500C9.500 8.500 2.500 8.500 .5 5.500z" fill="#f2f2f2" stroke="#8a8a8a" stroke-width="1"/><circle cx="6" cy="5.200" r="2.300" fill="#8a8a8a"/><path d="M.8 3.800C3 .3 9 .3 11.200 3.800" fill="none" stroke="#8a8a8a" stroke-width="1.300"/></svg>
<!-- row 1 Kontur -->
<svg style="left:860px;top:142px" width="8" height="11"><path d="M1 1v9l6-4.500z" fill="#b8b8b8" stroke="#111" stroke-width="1.300" stroke-linejoin="round"/></svg>
<div class="t lnk" style="transform:scaleX(0.959);transform-origin:0 50%;left:870px;top:142px;font-size:11px">Kontur:</div>
<div class="a" style="left:915px;top:139px;width:18px;height:18px;border:1px solid #000;background:#fff"></div>
<div class="a" style="left:917px;top:141px;width:14px;height:14px;border:1px solid #000;background:#fff"></div>
<svg style="left:918px;top:142px" width="12" height="12"><path d="M.5 11.500L11.500.5" stroke="#b30838" stroke-width="1.800"/></svg>
<!-- row 2-4 Flaeche -->
<svg style="left:860px;top:166px" width="8" height="11"><path d="M1 1v9l6-4.500z" fill="#b8b8b8" stroke="#111" stroke-width="1.300" stroke-linejoin="round"/></svg>
<div class="t" style="transform:scaleX(0.887);transform-origin:0 50%;left:869px;top:167px;font-size:11px">Fläche:</div>
<div class="a" style="left:916px;top:164px;width:16px;height:16px;border:1px solid #333;background:#5d9443"></div>
<svg style="left:860px;top:190px" width="8" height="11"><path d="M1 1v9l6-4.500z" fill="#b8b8b8" stroke="#111" stroke-width="1.300" stroke-linejoin="round"/></svg>
<div class="t" style="transform:scaleX(0.887);transform-origin:0 50%;left:869px;top:191px;font-size:11px">Fläche:</div>
<div class="a" style="left:916px;top:188px;width:16px;height:16px;border:1px solid #333;background:#7b7b6f"></div>
<svg style="left:858px;top:216px" width="11" height="8"><path d="M1 1h9l-4.500 6z" fill="#b8b8b8" stroke="#111" stroke-width="1.300" stroke-linejoin="round"/></svg>
<div class="t" style="transform:scaleX(0.887);transform-origin:0 50%;left:869px;top:215px;font-size:11px">Fläche:</div>
<div class="a" style="left:915px;top:211px;width:18px;height:18px;border:1px solid #000;background:#fff"></div>
<div class="a" style="left:917px;top:213px;width:14px;height:14px;border:1px solid #000;background:#7b7b6f"></div>
<!-- sub rows -->
<div class="t" style="transform:scaleX(0.903);transform-origin:0 50%;left:880px;top:238px;font-size:11px;color:#1c1cd0;border-bottom:1px solid #1c1cd0">Transformieren</div>
<div class="t" style="left:1074px;top:236px;font-family:'Liberation Serif',serif;font-style:italic;font-weight:bold;font-size:14px;color:#222">fx</div>
<div class="a" style="left:857px;top:259px;width:236px;height:20px;background:#3399ff"></div>
<div class="t" style="transform:scaleX(0.932);transform-origin:0 50%;left:880px;top:262px;font-size:11px;font-weight:bold;color:#fff;border-bottom:1px solid #fff">Gaußscher Weichzeichner...</div>
<div class="t" style="left:1074px;top:260px;font-family:'Liberation Serif',serif;font-style:italic;font-weight:bold;font-size:14px;color:#2b4a78">fx</div>
<div class="t lnk" style="transform:scaleX(0.949);transform-origin:0 50%;left:880px;top:286px;font-size:11px">Deckkraft:</div>
<div class="t" style="transform:scaleX(0.885);transform-origin:0 50%;left:934px;top:287px;font-size:11px">80% Multiplizieren</div>
<div class="t lnk" style="transform:scaleX(0.949);transform-origin:0 50%;left:870px;top:310px;font-size:11px">Deckkraft:</div>
<div class="t" style="transform:scaleX(0.896);transform-origin:0 50%;left:924px;top:311px;font-size:11px">Standard</div>
<!-- red highlight -->
<div class="a" style="left:854px;top:256px;width:240px;height:51px;border:4px solid #ee1108;border-radius:1px"></div>
<!-- scrollbar -->
<div class="a" style="left:1093px;top:129px;width:15px;height:199px;background:linear-gradient(90deg,#e9e9e9,#f6f6f6 45%,#f0f0f0)"></div>
<svg style="left:1097px;top:136px" width="8" height="4"><path d="M0 4h8l-4-4z" fill="#333"/></svg>
<svg style="left:1097px;top:319px" width="8" height="4"><path d="M0 0h8l-4 4z" fill="#333"/></svg>
<div class="a" style="left:1094px;top:296px;width:13px;height:16px;background:linear-gradient(90deg,#fbfbfb,#dcdcdc);border:1px solid #9a9a9a;border-radius:2px"></div>
<!-- footer -->
<div class="a" style="left:833px;top:328px;width:276px;height:21px;background:#d4d4d4"></div><div class="a" style="left:833px;top:328px;width:260px;height:1px;background:#222"></div>
<div class="a" style="left:846px;top:331px;width:11px;height:11px;background:#4a4a4a;border:1px solid #222"></div>
<div class="a" style="left:849px;top:334px;width:5px;height:5px;background:#b5b5b5"></div>
<div class="a" style="left:880px;top:331px;width:10px;height:10px;background:#fff;border:1px solid #333"></div>
<div class="t" style="left:913px;top:328px;font-family:'Liberation Serif',serif;font-style:italic;font-weight:bold;font-size:14px;color:#222">fx</div>
<svg style="left:926px;top:338px" width="4" height="4"><path d="M4 0v4h-4z" fill="#222"/></svg>
<svg style="left:1007px;top:330px" width="12" height="12"><circle cx="6" cy="6" r="4.500" fill="none" stroke="#555" stroke-width="1.300"/><path d="M2.800 2.800l6.400 6.400" stroke="#555" stroke-width="1.300"/></svg>
<svg style="left:1042px;top:331px" width="11" height="11"><path d="M.5 3.500h7v7h-7z" fill="#fff" stroke="#333"/><path d="M3 .5h7.500v8" fill="none" stroke="#333"/><path d="M4 10.500h3.500v-3.500z" fill="#333"/></svg>
<svg style="left:1072px;top:329px" width="11" height="13"><path d="M1.500 4.500h8l-.8 8h-6.400z" fill="#e8e8e8" stroke="#333"/><path d="M.5 3.500h10M3.500 3v-1.500h4v1.500" fill="none" stroke="#333"/><path d="M4 6v5M7 6v5" stroke="#555"/></svg>
<svg style="left:1096px;top:337px" width="11" height="11"><g fill="#a0a0a0"><rect x="8" y="0" width="2" height="2"/><rect x="4" y="4" width="2" height="2"/><rect x="8" y="4" width="2" height="2"/><rect x="0" y="8" width="2" height="2"/><rect x="4" y="8" width="2" height="2"/><rect x="8" y="8" width="2" height="2"/></g></svg>

<!-- ===== right dock ===== -->
<div class="a" style="left:1147px;top:68px;width:215px;height:13px;background:linear-gradient(#333,#5a5a5a);border-bottom:1px solid #2a2a2a"></div>
<svg style="left:1349px;top:71px" width="9" height="7"><path d="M0 0v7l4-3.500zM5 0v7l4-3.500z" fill="#e6e6e6"/></svg>
<div class="a" style="left:1361px;top:68px;width:1px;height:655px;background:#6a6a6a"></div>
<!-- Farbe -->
<div class="tabbar" style="top:81px"></div>
<div class="tab on" style="left:1147px;top:81px;width:50px"></div>
<div class="tab" style="left:1197px;top:81px;width:61px"></div>
<div class="tab" style="left:1258px;top:81px;width:57px"></div>
<svg style="left:1151px;top:85px" width="7" height="10"><path d="M.5 4l3-3.500 3 3.500zM.5 6l3 3.500 3-3.500z" fill="#222"/></svg>
<div class="t tl" style="transform:scaleX(0.901);transform-origin:0 50%;left:1160px;top:84px">Farbe</div>
<div class="t tl" style="transform:scaleX(0.855);transform-origin:0 50%;left:1204px;top:84px">Farbfelder</div>
<div class="t tl" style="transform:scaleX(0.926);transform-origin:0 50%;left:1265px;top:84px">Farbhilfe</div>
<svg style="left:1344px;top:85px" width="15" height="9"><path d="M0 3h5l-2.500 3z" fill="#222"/><path d="M6 1.500h9M6 3.500h9M6 5.500h9M6 7.500h9" stroke="#222" stroke-width="1"/></svg>
<div class="pbody" style="top:98px;height:101px"></div>
<div class="a" style="left:1160px;top:114px;width:19px;height:18px;border:1px solid #111;background:#fff"></div>
<svg style="left:1161px;top:115px" width="17" height="16"><rect x="4.500" y="4.500" width="8" height="7" fill="#d8d8d8" stroke="#111"/><path d="M0 16L17 0" stroke="#c00838" stroke-width="2"/></svg>
<div class="a" style="left:1151px;top:104px;width:20px;height:20px;border:1px solid #111;background:#7b7b6f;box-shadow:0 0 0 1px #d5d5d5,inset 0 0 0 1px #8a8a80"></div>
<svg style="left:1152px;top:139px" width="12" height="13"><path d="M6 .8L11 3.300v6L6 12 1 9.300v-6z" fill="#f4f4f4" stroke="#222" stroke-width="1"/><path d="M1 3.300L6 6l5-2.700M6 6v6" fill="none" stroke="#222" stroke-width="1"/></svg>
<div class="a" style="left:1167px;top:138px;width:14px;height:14px;border:1px solid #222;background:#6e6e6e"></div>
<div class="t" style="left:1190px;top:104px;font-size:11px;color:#2e2e2e;text-shadow:.4px 0 0 #2e2e2e">C</div>
<div class="t" style="left:1189px;top:122px;font-size:11px;color:#2e2e2e;text-shadow:.4px 0 0 #2e2e2e">M</div>
<div class="t" style="left:1190px;top:140px;font-size:11px;color:#2e2e2e;text-shadow:.4px 0 0 #2e2e2e">Y</div>
<div class="t" style="left:1190px;top:158px;font-size:11px;color:#2e2e2e;text-shadow:.4px 0 0 #2e2e2e">K</div>
<div class="a" style="left:1203px;top:106px;width:102px;height:6px;border:1px solid #222;background:linear-gradient(90deg,#e9a47a,#9a8a78 50%,#0f6a86)"></div>
<svg style="left:1253px;top:112px" width="10" height="6"><path d="M5 .6L9.300 5.500H.7z" fill="#f2f2f2" stroke="#777" stroke-width="1"/></svg>
<div class="a" style="left:1203px;top:124px;width:102px;height:6px;border:1px solid #222;background:linear-gradient(90deg,#5aa58a,#80807a 50%,#a0304e)"></div>
<svg style="left:1242px;top:130px" width="10" height="6"><path d="M5 .6L9.300 5.500H.7z" fill="#f2f2f2" stroke="#777" stroke-width="1"/></svg>
<div class="a" style="left:1203px;top:142px;width:102px;height:6px;border:1px solid #222;background:linear-gradient(90deg,#7a7cc0,#7c7c70 55%,#9a923a)"></div>
<svg style="left:1250px;top:148px" width="10" height="6"><path d="M5 .6L9.300 5.500H.7z" fill="#f2f2f2" stroke="#777" stroke-width="1"/></svg>
<div class="a" style="left:1203px;top:160px;width:102px;height:6px;border:1px solid #222;background:linear-gradient(90deg,#949488,#4a4a44 55%,#0a0a0a)"></div>
<svg style="left:1211px;top:166px" width="10" height="6"><path d="M5 .6L9.300 5.500H.7z" fill="#f2f2f2" stroke="#777" stroke-width="1"/></svg>
<div class="a" style="left:1310px;top:101px;width:33px;height:17px;background:#fff"></div>
<div class="a" style="left:1310px;top:119px;width:33px;height:17px;background:#fff"></div>
<div class="a" style="left:1310px;top:137px;width:33px;height:17px;background:#fff"></div>
<div class="a" style="left:1310px;top:155px;width:33px;height:17px;background:#fff"></div>
<div class="t" style="transform:scaleX(0.865);transform-origin:0 50%;left:1315px;top:104px;font-size:11px">55</div>
<div class="t" style="transform:scaleX(0.865);transform-origin:0 50%;left:1315px;top:122px;font-size:11px">44</div>
<div class="t" style="transform:scaleX(0.865);transform-origin:0 50%;left:1315px;top:140px;font-size:11px">52</div>
<div class="t" style="transform:scaleX(0.865);transform-origin:0 50%;left:1315px;top:158px;font-size:11px">13</div>
<div class="t" style="left:1346px;top:104px;font-size:11px">%</div>
<div class="t" style="left:1346px;top:122px;font-size:11px">%</div>
<div class="t" style="left:1346px;top:140px;font-size:11px">%</div>
<div class="t" style="left:1346px;top:158px;font-size:11px">%</div>
<div class="a" style="left:1152px;top:174px;width:200px;height:18px;border:1px solid #111;background:linear-gradient(rgba(255,255,255,.85) 0,rgba(255,255,255,0) 45%,rgba(0,0,0,0) 55%,rgba(0,0,0,.95) 100%),linear-gradient(90deg,#ff0000 0%,#ff0000 8%,#ffff00 22%,#00e000 36%,#00d8ff 52%,#1020ff 66%,#c000c0 80%,#ff0030 92%,#ff0000 100%)"></div>
<div class="a" style="left:1153px;top:175px;width:16px;height:16px;background:#fff;border-right:1px solid #111"></div>
<svg style="left:1153px;top:175px" width="15" height="16"><path d="M0 16L15 0" stroke="#c00838" stroke-width="2"/></svg>
<div class="a" style="left:1336px;top:175px;width:15px;height:8px;background:#fff"></div>
<div class="a" style="left:1336px;top:183px;width:15px;height:8px;background:#000"></div>
<div class="sep" style="top:199px"></div>
<!-- Grafikstile -->
<div class="tabbar" style="top:202px"></div>
<div class="tab" style="left:1147px;top:202px;width:41px;border-left:none"></div>
<div class="tab" style="left:1188px;top:202px;width:57px"></div>
<div class="tab on" style="left:1245px;top:202px;width:64px"></div>
<div class="t tl" style="transform:scaleX(0.833);transform-origin:0 50%;left:1154px;top:205px">Pinsel</div>
<div class="t tl" style="transform:scaleX(0.894);transform-origin:0 50%;left:1196px;top:205px">Symbole</div>
<div class="t tl" style="transform:scaleX(0.892);transform-origin:0 50%;left:1252px;top:205px">Grafikstile</div>
<svg style="left:1344px;top:206px" width="15" height="9"><path d="M0 3h5l-2.500 3z" fill="#222"/><path d="M6 1.500h9M6 3.500h9M6 5.500h9M6 7.500h9" stroke="#222" stroke-width="1"/></svg>
<div class="pbody" style="top:219px;height:155px"></div>
<div class="a" style="left:1148px;top:220px;width:193px;height:33px;background:#fff;border:1px solid #222"></div>
<div class="a" style="left:1180px;top:221px;width:1px;height:31px;background:#222"></div>
<div class="a" style="left:1212px;top:221px;width:1px;height:31px;background:#222"></div>
<div class="a" style="left:1244px;top:221px;width:1px;height:31px;background:#222"></div>
<div class="a" style="left:1276px;top:221px;width:1px;height:31px;background:#222"></div>
<div class="a" style="left:1308px;top:221px;width:1px;height:31px;background:#222"></div>
<div class="a" style="left:1153px;top:225px;width:23px;height:23px;border:1px solid #888;background:#fff"></div>
<div class="a" style="left:1151px;top:240px;width:7px;height:7px;border:1px solid #333;background:#fff"></div>
<div class="a" style="left:1155px;top:244px;width:6px;height:6px;background:#222"></div>
<div class="a" style="left:1189px;top:227px;width:14px;height:18px;border-radius:3px;background:#fbfbfb;box-shadow:0 1px 3px 1px rgba(0,0,0,.12)"></div>
<div class="a" style="left:1218px;top:225px;width:22px;height:23px;border:1px solid #666;border-radius:5px;background:#fff"></div>
<div class="a" style="left:1217px;top:241px;width:8px;height:8px;border:1px solid #333;background:#fff"></div>
<svg style="left:1218px;top:242px" width="6" height="6"><path d="M0 6L6 0" stroke="#c00838" stroke-width="2"/></svg>
<div class="a" style="left:1250px;top:231px;width:12px;height:17px;border:1px solid #999;background:#fff"></div>
<div class="a" style="left:1261px;top:231px;width:12px;height:12px;border:1px solid #999;background:#fff"></div>
<div class="a" style="left:1249px;top:241px;width:8px;height:8px;border:1px solid #333;background:#fff"></div>
<svg style="left:1250px;top:242px" width="6" height="6"><path d="M0 6L6 0" stroke="#c00838" stroke-width="2"/></svg>
<svg style="left:1283px;top:227px" width="20" height="19"><rect width="20" height="19" fill="#2a2a6a"/><g><circle cx="3" cy="3" r="2" fill="#f0e020"/><circle cx="9" cy="3" r="2" fill="#e01878"/><circle cx="15" cy="3" r="2" fill="#20c8e8"/><circle cx="6" cy="8" r="2" fill="#30d040"/><circle cx="12" cy="8" r="2" fill="#f08018"/><circle cx="18" cy="8" r="2" fill="#e01878"/><circle cx="3" cy="13" r="2" fill="#e01878"/><circle cx="9" cy="13" r="2" fill="#f0e020"/><circle cx="15" cy="13" r="2" fill="#30d040"/><circle cx="6" cy="17" r="2" fill="#20c8e8"/><circle cx="12" cy="17" r="2" fill="#e83030"/><circle cx="18" cy="17" r="2" fill="#f0e020"/></g></svg>
<div class="a" style="left:1313px;top:225px;width:24px;height:24px;background:linear-gradient(135deg,#c1cbb3,#9fac92);border:1px solid #b6bfac"></div>
<div class="a" style="left:1345px;top:220px;width:15px;height:136px;background:linear-gradient(90deg,#d9d9d9,#e4e4e4)"></div>
<svg style="left:1349px;top:228px" width="8" height="4"><path d="M0 4h8l-4-4z" fill="#8c8c8c"/></svg>
<svg style="left:1349px;top:345px" width="8" height="4"><path d="M0 0h8l-4 4z" fill="#8c8c8c"/></svg>
<div class="a" style="left:1148px;top:356px;width:197px;height:1px;background:#222"></div>
<svg style="left:1158px;top:361px" width="14" height="11"><rect x=".5" y=".5" width="8" height="7" fill="#e8e8e8" stroke="#444"/><rect x="3.500" y="3.500" width="8" height="6" fill="#bdbdbd" stroke="#444"/><path d="M10 11h4v-4z" fill="#222"/></svg>
<svg style="left:1255px;top:361px" width="18" height="10"><path d="M0 5h5M13 5h5" stroke="#9a9a9a" stroke-width="2"/><path d="M9 0v10M6 1l6 8M12 1l-6 8" stroke="#a5a5a5" stroke-width="1"/></svg>
<svg style="left:1293px;top:361px" width="11" height="11"><path d="M.5 3.500h7v7h-7z" fill="#fff" stroke="#333"/><path d="M3 .5h7.500v8" fill="none" stroke="#333"/><path d="M4 10.500h3.500v-3.500z" fill="#333"/></svg>
<svg style="left:1324px;top:360px" width="11" height="13"><path d="M1.500 4.500h8l-.8 8h-6.400z" fill="#ececec" stroke="#888"/><path d="M.5 3.500h10M3.500 3v-1.500h4v1.500" fill="none" stroke="#888"/><path d="M4 6v5M7 6v5" stroke="#999"/></svg>
<svg style="left:1349px;top:364px" width="11" height="11"><g fill="#a0a0a0"><rect x="8" y="0" width="2" height="2"/><rect x="4" y="4" width="2" height="2"/><rect x="8" y="4" width="2" height="2"/><rect x="0" y="8" width="2" height="2"/><rect x="4" y="8" width="2" height="2"/><rect x="8" y="8" width="2" height="2"/></g></svg>
<div class="sep" style="top:374px"></div>

<!-- Ebenen -->
<div class="tabbar" style="top:377px;height:18px"></div>
<div class="tab on" style="left:1147px;top:377px;width:47px;height:19px"></div>
<div class="tab" style="left:1194px;top:377px;width:51px;height:18px"></div>
<div class="tab" style="left:1245px;top:377px;width:47px;height:18px"></div>
<div class="t tl" style="transform:scaleX(0.856);transform-origin:0 50%;left:1154px;top:381px">Ebenen</div>
<div class="t tl" style="transform:scaleX(0.890);transform-origin:0 50%;left:1201px;top:381px">Zeichen</div>
<div class="t tl" style="transform:scaleX(0.887);transform-origin:0 50%;left:1252px;top:381px">Absatz</div>
<svg style="left:1344px;top:382px" width="15" height="9"><path d="M0 3h5l-2.500 3z" fill="#222"/><path d="M6 1.500h9M6 3.500h9M6 5.500h9M6 7.500h9" stroke="#222" stroke-width="1"/></svg>
<div class="pbody" style="top:395px;height:119px"></div>
<div class="a" style="left:1148px;top:395px;width:196px;height:1px;background:#222"></div>
<div class="a" style="left:1194px;top:396px;width:150px;height:80px;background:#fff"></div>
<div class="a" style="left:1194px;top:396px;width:15px;height:20px;background:#e9e9e9"></div>
<div class="a" style="left:1209px;top:396px;width:135px;height:20px;background:#3399ff"></div>
<div class="a" style="left:1194px;top:476px;width:150px;height:20px;background:#d2d2d2"></div>
<div class="a" style="left:1224px;top:435px;width:120px;height:1px;background:#cfcfcf"></div>
<div class="a" style="left:1224px;top:455px;width:120px;height:1px;background:#cfcfcf"></div>
<div class="a" style="left:1148px;top:496px;width:196px;height:1px;background:#9a9a9a"></div>
<div class="a" style="left:1193px;top:396px;width:1px;height:100px;background:#222"></div>
<div class="a" style="left:1150px;top:397px;width:17px;height:18px;background:#dcdcdc;border:1px solid #bcbcbc;border-right-color:#f4f4f4;border-bottom-color:#f4f4f4"></div><div class="a" style="left:1168px;top:397px;width:15px;height:18px;background:#dcdcdc;border:1px solid #bcbcbc;border-right-color:#f4f4f4;border-bottom-color:#f4f4f4"></div><div class="a" style="left:1185px;top:397px;width:5px;height:18px;background:#0f8a50"></div><svg style="left:1152px;top:401px" width="13" height="10"><path d="M.5 5.500C2.500 1.500 10.500 1.500 12.500 5.500C10.500 8.500 2.500 8.500 .5 5.500z" fill="#f2f2f2" stroke="#111" stroke-width="1"/><circle cx="6.500" cy="5.200" r="2.400" fill="#111"/><path d="M.8 3.800C3 .3 10 .3 12.200 3.800" fill="none" stroke="#111" stroke-width="1.300"/></svg><div class="a" style="left:1150px;top:417px;width:17px;height:18px;background:#dcdcdc;border:1px solid #bcbcbc;border-right-color:#f4f4f4;border-bottom-color:#f4f4f4"></div><div class="a" style="left:1168px;top:417px;width:15px;height:18px;background:#dcdcdc;border:1px solid #bcbcbc;border-right-color:#f4f4f4;border-bottom-color:#f4f4f4"></div><div class="a" style="left:1185px;top:417px;width:5px;height:18px;background:#0f8a50"></div><svg style="left:1152px;top:421px" width="13" height="10"><path d="M.5 5.500C2.500 1.500 10.500 1.500 12.500 5.500C10.500 8.500 2.500 8.500 .5 5.500z" fill="#f2f2f2" stroke="#111" stroke-width="1"/><circle cx="6.500" cy="5.200" r="2.400" fill="#111"/><path d="M.8 3.800C3 .3 10 .3 12.200 3.800" fill="none" stroke="#111" stroke-width="1.300"/></svg><div class="a" style="left:1150px;top:437px;width:17px;height:18px;background:#dcdcdc;border:1px solid #bcbcbc;border-right-color:#f4f4f4;border-bottom-color:#f4f4f4"></div><div class="a" style="left:1168px;top:437px;width:15px;height:18px;background:#dcdcdc;border:1px solid #bcbcbc;border-right-color:#f4f4f4;border-bottom-color:#f4f4f4"></div><div class="a" style="left:1185px;top:437px;width:5px;height:18px;background:#0f8a50"></div><svg style="left:1152px;top:441px" width="13" height="10"><path d="M.5 5.500C2.500 1.500 10.500 1.500 12.500 5.500C10.500 8.500 2.500 8.500 .5 5.500z" fill="#f2f2f2" stroke="#111" stroke-width="1"/><circle cx="6.500" cy="5.200" r="2.400" fill="#111"/><path d="M.8 3.800C3 .3 10 .3 12.200 3.800" fill="none" stroke="#111" stroke-width="1.300"/></svg><svg style="left:1171px;top:440px" width="10" height="12"><path d="M2.500 5.500v-2a2.500 2.500 0 0 1 5 0v2" fill="none" stroke="#222" stroke-width="1.400"/><rect x=".7" y="5.500" width="8.600" height="6" rx="1" fill="#3a3a3a"/><rect x="4.200" y="7.200" width="1.600" height="2.600" fill="#ddd"/></svg><div class="a" style="left:1150px;top:457px;width:17px;height:18px;background:#dcdcdc;border:1px solid #bcbcbc;border-right-color:#f4f4f4;border-bottom-color:#f4f4f4"></div><div class="a" style="left:1168px;top:457px;width:15px;height:18px;background:#dcdcdc;border:1px solid #bcbcbc;border-right-color:#f4f4f4;border-bottom-color:#f4f4f4"></div><div class="a" style="left:1185px;top:457px;width:5px;height:18px;background:#0f8a50"></div><div class="a" style="left:1150px;top:477px;width:17px;height:18px;background:#dcdcdc;border:1px solid #bcbcbc;border-right-color:#f4f4f4;border-bottom-color:#f4f4f4"></div><div class="a" style="left:1168px;top:477px;width:15px;height:18px;background:#dcdcdc;border:1px solid #bcbcbc;border-right-color:#f4f4f4;border-bottom-color:#f4f4f4"></div><div class="a" style="left:1185px;top:477px;width:5px;height:18px;background:#ea5a16"></div><svg style="left:1152px;top:481px" width="13" height="10"><path d="M.5 5.500C2.500 1.500 10.500 1.500 12.500 5.500C10.500 8.500 2.500 8.500 .5 5.500z" fill="#f2f2f2" stroke="#111" stroke-width="1"/><circle cx="6.500" cy="5.200" r="2.400" fill="#111"/><path d="M.8 3.800C3 .3 10 .3 12.200 3.800" fill="none" stroke="#111" stroke-width="1.300"/></svg><svg style="left:1171px;top:480px" width="10" height="12"><path d="M2.500 5.500v-2a2.500 2.500 0 0 1 5 0v2" fill="none" stroke="#222" stroke-width="1.400"/><rect x=".7" y="5.500" width="8.600" height="6" rx="1" fill="#3a3a3a"/><rect x="4.200" y="7.200" width="1.600" height="2.600" fill="#ddd"/></svg>
<svg style="left:1197px;top:402px" width="11" height="8"><path d="M.7.7h9.600L5.500 7z" fill="#fff" stroke="#8a8a8a" stroke-width="1"/></svg>
<div class="a" style="left:1211px;top:397px;width:16px;height:17px;background:#fff;border:1px solid #222"></div>
<div class="a" style="left:1215px;top:401px;width:8px;height:9px;background:#5d9443;border-radius:2px"></div>
<div class="t" style="transform:scaleX(0.937);transform-origin:0 50%;left:1231px;top:400px;font-size:11px;font-weight:bold;color:#fff">Meine Ebene</div>
<svg style="left:1319px;top:401px" width="11" height="11"><circle cx="5.500" cy="5.500" r="4.200" fill="#3a9cff" stroke="#1a3a6a" stroke-width="1.200"/></svg>
<div class="a" style="left:1335px;top:404px;width:5px;height:5px;background:#0f8a50"></div>
<svg style="left:1338px;top:396px" width="6" height="6"><path d="M0 0h6v6z" fill="#111"/></svg>
<div class="a" style="left:1226px;top:417px;width:16px;height:17px;background:#fff;border:1px solid #222"></div>
<div class="a" style="left:1229px;top:420px;width:10px;height:11px;background:#5d9443;border-radius:3px"></div>
<div class="t" style="transform:scaleX(0.930);transform-origin:0 50%;left:1246px;top:420px;font-size:11px">&lt;Pfad&gt;</div>
<svg style="left:1317px;top:419px" width="15" height="15"><circle cx="7.500" cy="7.500" r="6.300" fill="#eee" stroke="#333" stroke-width="1"/><circle cx="7.500" cy="7.500" r="4" fill="#777" stroke="#222" stroke-width="1"/><circle cx="6.300" cy="6.200" r="1.500" fill="#ddd"/></svg>
<div class="a" style="left:1334px;top:422px;width:8px;height:8px;background:#1f7a48;border:1px solid #0c4a28"></div>
<div class="a" style="left:1226px;top:437px;width:16px;height:17px;background:#eeeee6;border:1px solid #222;box-shadow:inset 0 0 0 2px #fff"></div>
<div class="t" style="transform:scaleX(0.957);transform-origin:0 50%;left:1246px;top:440px;font-size:11px">Hintergrund</div>
<svg style="left:1319px;top:440px" width="11" height="11"><circle cx="5.500" cy="5.500" r="4.300" fill="#555" stroke="#333" stroke-width="1"/><circle cx="4.300" cy="4.200" r="1.500" fill="#ccc"/></svg>
<div class="a" style="left:1226px;top:457px;width:16px;height:17px;background:#ea5a16;border:1px solid #222"></div>
<div class="t" style="transform:scaleX(0.930);transform-origin:0 50%;left:1246px;top:460px;font-size:11px">&lt;Pfad&gt;</div>
<svg style="left:1319px;top:460px" width="11" height="11"><circle cx="5.500" cy="5.500" r="4.200" fill="#fff" stroke="#333" stroke-width="1.100"/></svg>
<svg style="left:1198px;top:480px" width="8" height="11"><path d="M.7.7v9.600L7 5.500z" fill="#eee" stroke="#8a8a8a" stroke-width="1"/></svg>
<div class="a" style="left:1211px;top:477px;width:16px;height:17px;background:#fff;border:1px solid #222"></div>
<div class="a" style="left:1219px;top:489px;width:2px;height:1px;background:#c33"></div>
<div class="t" style="transform:scaleX(0.938);transform-origin:0 50%;left:1231px;top:480px;font-size:11px">Vorlage</div>
<svg style="left:1319px;top:480px" width="11" height="11"><circle cx="5.500" cy="5.500" r="4.200" fill="#ddd" stroke="#444" stroke-width="1.100"/></svg>
<div class="a" style="left:1344px;top:396px;width:16px;height:100px;background:linear-gradient(90deg,#e2e2e2,#eeeeee)"></div>
<svg style="left:1348px;top:403px" width="8" height="4"><path d="M0 4h8l-4-4z" fill="#8c8c8c"/></svg>
<svg style="left:1348px;top:486px" width="8" height="4"><path d="M0 0h8l-4 4z" fill="#8c8c8c"/></svg>
<div class="t" style="transform:scaleX(0.870);transform-origin:0 50%;left:1158px;top:499px;font-size:11px">2 Ebenen</div>
<svg style="left:1228px;top:498px" width="14" height="13"><rect x=".5" y=".5" width="7" height="6" fill="#e8e8e8" stroke="#777" stroke-dasharray="1 1"/><circle cx="8.500" cy="7.500" r="4.500" fill="#e8e8e8" stroke="#222"/><path d="M8.500 7.500v-4.500a4.500 4.500 0 0 1 4.500 4.500z" fill="#222"/></svg>
<svg style="left:1257px;top:499px" width="16" height="12"><path d="M0 4h5M3 2l2.500 2L3 6" fill="none" stroke="#222" stroke-width="1.200"/><path d="M7.500 4.500h5v7h-5z" fill="#fff" stroke="#333"/><path d="M9.500 1.500h6v8" fill="none" stroke="#333"/><path d="M9 11.500h3.500v-3.500z" fill="#333"/></svg>
<svg style="left:1292px;top:500px" width="11" height="11"><path d="M.5 3.500h7v7h-7z" fill="#fff" stroke="#333"/><path d="M3 .5h7.500v8" fill="none" stroke="#333"/><path d="M4 10.500h3.500v-3.500z" fill="#333"/></svg>
<svg style="left:1322px;top:498px" width="11" height="13"><path d="M1.500 4.500h8l-.8 8h-6.400z" fill="#e8e8e8" stroke="#333"/><path d="M.5 3.500h10M3.500 3v-1.500h4v1.500" fill="none" stroke="#333"/><path d="M4 6v5M7 6v5" stroke="#555"/></svg>
<svg style="left:1349px;top:502px" width="11" height="11"><g fill="#a0a0a0"><rect x="8" y="0" width="2" height="2"/><rect x="4" y="4" width="2" height="2"/><rect x="8" y="4" width="2" height="2"/><rect x="0" y="8" width="2" height="2"/><rect x="4" y="8" width="2" height="2"/><rect x="8" y="8" width="2" height="2"/></g></svg>
<div class="sep" style="top:514px"></div>


<!-- Verlauf -->
<div class="tabbar" style="top:517px"></div>
<div class="tab on" style="left:1147px;top:517px;width:59px"></div>
<div class="tab" style="left:1206px;top:517px;width:71px"></div>
<svg style="left:1151px;top:521px" width="7" height="10"><path d="M.5 4l3-3.500 3 3.500zM.5 6l3 3.500 3-3.500z" fill="#222"/></svg>
<div class="t tl" style="transform:scaleX(0.927);transform-origin:0 50%;left:1160px;top:520px">Verlauf</div>
<div class="t tl" style="transform:scaleX(0.879);transform-origin:0 50%;left:1213px;top:520px">Transparenz</div>
<svg style="left:1344px;top:521px" width="15" height="9"><path d="M0 3h5l-2.500 3z" fill="#222"/><path d="M6 1.500h9M6 3.500h9M6 5.500h9M6 7.500h9" stroke="#222" stroke-width="1"/></svg>
<div class="pbody" style="top:534px;height:166px"></div>
<div class="a" style="left:1155px;top:538px;width:28px;height:29px;border:1px solid #000;background:linear-gradient(90deg,#fff,#101010);box-shadow:0 0 0 1px #ededed"></div>
<div class="a" style="left:1185px;top:538px;width:9px;height:29px;border:1px solid #7d7d7d;background:linear-gradient(90deg,#f4f4f4,#d8d8d8)"></div>
<svg style="left:1187px;top:551px" width="6" height="4"><path d="M0 0h6l-3 3.500z" fill="#111"/></svg>
<div class="t" style="transform:scaleX(0.818);transform-origin:0 50%;left:1198px;top:546px;font-size:11px;font-weight:bold;color:#333">Art:</div>
<div class="a" style="left:1217px;top:542px;width:122px;height:18px;background:#fff;border:1px solid #c8c8c8"></div>
<div class="a" style="left:1319px;top:543px;width:19px;height:16px;background:#fbfbfb;border-left:1px solid #e2e2e2"></div>
<svg style="left:1326px;top:549px" width="8" height="5"><path d="M0 0h8l-4 4.500z" fill="#000"/></svg>
<svg style="left:1161px;top:576px" width="17" height="15"><rect x=".5" y=".5" width="7" height="5" fill="#bbb" stroke="#777"/><rect x="8.500" y="9.500" width="7" height="5" fill="#ddd" stroke="#777"/><path d="M9.500 3h4.500v3.500M12 5l2 2 2-2" fill="none" stroke="#555" stroke-width="1.200"/><path d="M6.500 12h-4.500v-3.500M0 10.500l2-2 2 2" fill="none" stroke="#555" stroke-width="1.200"/></svg>
<svg style="left:1200px;top:578px" width="11" height="10"><path d="M.7 9.300h9.600L7 1.500z" fill="#ececec" stroke="#444" stroke-width="1"/><path d="M4 9a4 4 0 0 0-1.200-2.500" fill="none" stroke="#444"/></svg>
<div class="a" style="left:1215px;top:574px;width:45px;height:18px;background:#d9d9d9;border:1px solid #b9b9b9;border-right-color:#efefef;border-bottom-color:#efefef"></div><div class="a" style="left:1243px;top:575px;width:16px;height:16px;background:linear-gradient(90deg,#d6d6d6,#e9e9e9);border-left:1px solid #c6c6c6"></div><svg style="left:1250px;top:579px" width="5" height="8"><path d="M0 0v8l4.500-4z" fill="#9a9a9a"/></svg>
<div class="t" style="left:1262px;top:572px;font-size:9px;color:#777">°</div>
<svg style="left:1272px;top:575px" width="18" height="17"><path d="M2.500 1v11M.5 3l2-2.500 2 2.500M.5 10l2 2.500 2-2.500" fill="none" stroke="#111" stroke-width="1.200"/><ellipse cx="11.500" cy="7" rx="5" ry="3.600" fill="#e6e6e6" stroke="#777"/><path d="M6 14.500h11M7.500 13l-1.500 1.500 1.500 1.500M15.500 13l1.500 1.500-1.500 1.500" fill="none" stroke="#7a8aa8" stroke-width=".9" stroke-dasharray="1 1"/></svg>
<div class="a" style="left:1290px;top:574px;width:49px;height:18px;background:#d9d9d9;border:1px solid #b9b9b9;border-right-color:#efefef;border-bottom-color:#efefef"></div>
<div class="t" style="left:1340px;top:578px;font-size:11px;color:#aaa;text-shadow:0 1px 0 #f4f4f4">%</div>
<div class="a" style="left:1157px;top:604px;width:167px;height:12px;border:1px solid #000;background:linear-gradient(90deg,#fff,#0c0c0c);box-shadow:0 0 0 1px #e9e9e9"></div>
<svg style="left:1329px;top:606px" width="12" height="14"><path d="M1.500 4.500h9l-.9 9h-7.200z" fill="#e4e4e4" stroke="#9a9a9a"/><path d="M.5 3.500h11M4 3v-1.500h4v1.500" fill="none" stroke="#9a9a9a"/><path d="M4.500 6v6M7.500 6v6" stroke="#aaa"/></svg>
<div class="t" style="transform:scaleX(0.949);transform-origin:0 50%;left:1164px;top:644px;font-size:11px;color:#f2f2f2;text-shadow:0 1px 0 #9c9c9c,1px 0 0 #b0b0b0">Deckkraft:</div>
<div class="a" style="left:1215px;top:641px;width:45px;height:18px;background:#d9d9d9;border:1px solid #b9b9b9;border-right-color:#efefef;border-bottom-color:#efefef"></div><div class="a" style="left:1243px;top:642px;width:16px;height:16px;background:linear-gradient(90deg,#d6d6d6,#e9e9e9);border-left:1px solid #c6c6c6"></div><svg style="left:1250px;top:646px" width="5" height="8"><path d="M0 0v8l4.500-4z" fill="#9a9a9a"/></svg>
<div class="t" style="left:1262px;top:644px;font-size:11px;color:#f2f2f2;text-shadow:0 1px 0 #9c9c9c,1px 0 0 #b0b0b0">%</div>
<div class="t" style="transform:scaleX(0.900);transform-origin:0 50%;left:1173px;top:668px;font-size:11px;color:#f2f2f2;text-shadow:0 1px 0 #9c9c9c,1px 0 0 #b0b0b0">Position:</div>
<div class="a" style="left:1215px;top:665px;width:45px;height:18px;background:#d9d9d9;border:1px solid #b9b9b9;border-right-color:#efefef;border-bottom-color:#efefef"></div><div class="a" style="left:1243px;top:666px;width:16px;height:16px;background:linear-gradient(90deg,#d6d6d6,#e9e9e9);border-left:1px solid #c6c6c6"></div><svg style="left:1250px;top:670px" width="5" height="8"><path d="M0 0v8l4.500-4z" fill="#9a9a9a"/></svg>
<div class="t" style="left:1262px;top:668px;font-size:11px;color:#f2f2f2;text-shadow:0 1px 0 #9c9c9c,1px 0 0 #b0b0b0">%</div>
<div class="sep" style="top:700px"></div>
<!-- Ausrichten -->
<div class="tabbar" style="top:703px;height:20px"></div>
<div class="tab on" style="left:1147px;top:703px;width:73px;height:20px"></div>
<div class="tab" style="left:1220px;top:703px;width:65px;height:20px"></div>
<svg style="left:1151px;top:708px" width="7" height="10"><path d="M.5 4l3-3.500 3 3.500zM.5 6l3 3.500 3-3.500z" fill="#222"/></svg>
<div class="t tl" style="transform:scaleX(0.870);transform-origin:0 50%;left:1160px;top:707px">Ausrichten</div>
<div class="t tl" style="transform:scaleX(0.901);transform-origin:0 50%;left:1227px;top:707px">Pathfinder</div>
<svg style="left:1344px;top:708px" width="15" height="9"><path d="M0 3h5l-2.500 3z" fill="#222"/><path d="M6 1.500h9M6 3.500h9M6 5.500h9M6 7.500h9" stroke="#222" stroke-width="1"/></svg>


<!-- ===== tools ===== -->
<div class="a" style="left:9px;top:85px;width:52px;height:3px;background-image:repeating-linear-gradient(90deg,#9e9e9e 0 1px,rgba(0,0,0,0) 1px 2px);opacity:.8"></div>
<div class="a" style="left:9px;top:86px;width:52px;height:1px;background:#d4d4d4"></div>
<div class="a" style="left:10px;top:98px;width:24px;height:20px;border:1px solid #5a5a5a;border-radius:3px;background:linear-gradient(#a9a9a9,#c6c6c6);box-shadow:inset 0 1px 2px rgba(0,0,0,.25)"></div>
<svg style="left:17px;top:101px" width="11" height="15"><path d="M1 .5v11l2.800-2.500 2.300 5 2-.9-2.300-4.900h3.700z" fill="#111"/></svg>
<svg style="left:41px;top:101px" width="11" height="15"><path d="M1.200 1v10.500l2.700-2.400 2.200 4.700 1.900-.9-2.200-4.600h3.500z" fill="#fff" stroke="#111" stroke-width="1"/><path d="M3.900 9.100l2.200 4.700 1.900-.9-2.200-4.600z" fill="#111" stroke="#111" stroke-width=".8"/></svg>
<svg style="left:55px;top:114px" width="3" height="3"><path d="M3 0v3h-3z" fill="#111"/></svg>
<svg style="left:12px;top:121px" width="18" height="15"><path d="M7 6l9.500 8" stroke="#111" stroke-width="1.700"/><path d="M6 .5v10M1 5.500h10M2.500 2l7 7M9.500 2l-7 7" stroke="#555" stroke-width=".9"/></svg>
<svg style="left:38px;top:121px" width="19" height="17"><path d="M3 9c-3-3.500 1-8 7.500-8s8.500 4.500 5.500 7.500" fill="none" stroke="#222" stroke-width="1.300"/><path d="M3 9c.8 1.500 2.500 1.500 3.500.8M3.800 10c-1.200 1.200.6 2.500.2 3.800s-1.400 1.400-1 2.400" fill="none" stroke="#222" stroke-width="1.100"/><path d="M8.500 5.500v9.500l2.300-2.200 1.600 3.400 1.700-.8-1.600-3.300h3.300z" fill="#fff" stroke="#222" stroke-width=".9"/></svg>
<div class="a" style="left:8px;top:141px;width:53px;height:1px;background:#f2f2f2"></div><div class="a" style="left:8px;top:140px;width:53px;height:1px;background:#bdbdbd"></div>
<svg style="left:16px;top:144px" width="11" height="18"><path d="M5.500 1l4 8.500-2 4h-4l-2-4z" fill="#fff" stroke="#111" stroke-width="1.200"/><path d="M5.500 1v7" stroke="#111"/><circle cx="5.500" cy="9" r="1.200" fill="#111"/><path d="M2.500 14.500h6v3h-6z" fill="#111"/></svg>
<svg style="left:30px;top:160px" width="3" height="3"><path d="M3 0v3h-3z" fill="#111"/></svg>
<div class="t" style="transform:scaleX(1.064);transform-origin:0 50%;left:40px;top:143px;font-family:'Liberation Serif',serif;font-size:20px;color:#111;text-shadow:.4px 0 0 #111">T</div>
<svg style="left:55px;top:160px" width="3" height="3"><path d="M3 0v3h-3z" fill="#111"/></svg>
<svg style="left:14px;top:168px" width="15" height="14"><path d="M.5.5l13.500 13" stroke="#111" stroke-width="1.500"/></svg>
<svg style="left:30px;top:181px" width="3" height="3"><path d="M3 0v3h-3z" fill="#111"/></svg>
<div class="a" style="left:40px;top:169px;width:14px;height:12px;border:1px solid #333;background:linear-gradient(135deg,#fafafa,#a8a8a8);box-shadow:1px 1px 1px rgba(0,0,0,.25)"></div>
<svg style="left:55px;top:181px" width="3" height="3"><path d="M3 0v3h-3z" fill="#111"/></svg>
<svg style="left:14px;top:188px" width="17" height="15"><path d="M16 .5L7.500 9" stroke="#222" stroke-width="1.500"/><path d="M8.500 8.500c-1-.5-3 0-4 1.500s-2.500 3-4 3.500c3 1 6.500 0 8-2s.8-2.500 0-3z" fill="#555" stroke="#222" stroke-width=".8"/></svg>
<svg style="left:38px;top:188px" width="17" height="16"><path d="M12 1l3.500 3.500-10 9.500-4.500 1.500 1.500-4.500z" fill="#f4f4f4" stroke="#222" stroke-width="1.100"/><path d="M10 3l3.500 3.500" stroke="#222"/><path d="M1 15.500l1.500-4.500 3 3z" fill="#222"/></svg>
<svg style="left:55px;top:202px" width="3" height="3"><path d="M3 0v3h-3z" fill="#111"/></svg>
<svg style="left:12px;top:208px" width="19" height="17"><path d="M1.500 5.500h10v10h-7l-3-2z" fill="#fff" stroke="#111" stroke-width="1.200"/><path d="M18 .5L12 6.500" stroke="#222" stroke-width="1.400"/><path d="M12.500 6c-1-.8-3.500-.5-5 1s-2 3-3.500 3.500c3 1.200 6.500.5 8-1.500s1.300-2.300.5-3z" fill="#777" stroke="#222" stroke-width=".8"/></svg>
<svg style="left:38px;top:210px" width="18" height="14"><path d="M7 1h10l-6 8h-10z" fill="#f6f6f6" stroke="#222" stroke-width="1"/><path d="M1 9v3h10l6-8v-3" fill="#cfcfcf" stroke="#222" stroke-width="1"/><path d="M11 9v3" stroke="#222"/></svg>
<svg style="left:55px;top:222px" width="3" height="3"><path d="M3 0v3h-3z" fill="#111"/></svg>
<div class="a" style="left:8px;top:231px;width:53px;height:1px;background:#f2f2f2"></div><div class="a" style="left:8px;top:230px;width:53px;height:1px;background:#bdbdbd"></div>
<svg style="left:14px;top:234px" width="16" height="16"><circle cx="8" cy="8.500" r="6" fill="none" stroke="#111" stroke-width="1.600" stroke-dasharray="1.600 2.200"/><path d="M3 4.500c1.500-2 3.500-2.500 5.500-2.300" fill="none" stroke="#111" stroke-width="1.500"/><path d="M1.500 2l4 .2-2.200 3.500z" fill="#111"/></svg>
<svg style="left:30px;top:247px" width="3" height="3"><path d="M3 0v3h-3z" fill="#111"/></svg>
<svg style="left:39px;top:234px" width="17" height="15"><rect x=".7" y=".7" width="11.500" height="8.500" fill="#f2f2f2" stroke="#111" stroke-width="1.300"/><rect x="9.500" y="6.500" width="6" height="6" fill="#d0d0d0" stroke="#777"/><path d="M2.500 2.500l5 4.500M2.500 2.500h3M2.500 2.500v3" stroke="#111" stroke-width="1.300" fill="none"/></svg>
<svg style="left:55px;top:247px" width="3" height="3"><path d="M3 0v3h-3z" fill="#111"/></svg>
<svg style="left:12px;top:256px" width="20" height="16"><path d="M1 9c2-4 4-4 6-1s4 3 5-1 2-5 3-5c-1 3-1 7-4 9s-5 0-6-1-2-1-4 0z" fill="#666" stroke="#444" stroke-width=".6"/><path d="M7 1.500l10.500 11" stroke="#111" stroke-width="1.100"/><circle cx="7" cy="1.800" r="1.200" fill="#fff" stroke="#111" stroke-width=".8"/><circle cx="12" cy="7" r="1.400" fill="#fff" stroke="#111" stroke-width=".8"/><circle cx="17" cy="12.500" r="1.200" fill="#fff" stroke="#111" stroke-width=".8"/></svg>
<svg style="left:30px;top:269px" width="3" height="3"><path d="M3 0v3h-3z" fill="#111"/></svg>
<svg style="left:38px;top:256px" width="18" height="14"><rect x="5" y="1.500" width="11.500" height="10" fill="#ddd" stroke="#111" stroke-width="1.700" stroke-dasharray="2 2.800"/><path d="M.8 1.500v9.500l7-4.700z" fill="#222"/></svg>
<svg style="left:12px;top:276px" width="20" height="17"><path d="M4 9.500c-4-1-4-6 0-6.500 1-3 6-3 7-.5 3-.5 4 3 2 4.500" fill="#eee" stroke="#333" stroke-width="1.200"/><circle cx="3.500" cy="6.500" r=".8" fill="#111"/><circle cx="6" cy="6.500" r=".8" fill="#111"/><circle cx="8.500" cy="6.500" r=".8" fill="#111"/><path d="M9.500 6v10l2.500-2.300 3.300-.2z" fill="#fff" stroke="#222" stroke-width="1"/></svg>
<svg style="left:30px;top:291px" width="3" height="3"><path d="M3 0v3h-3z" fill="#111"/></svg>
<svg style="left:38px;top:275px" width="17" height="17"><path d="M1 1v15.500M5.500 2.500v11.500M9.500 4v8.500M13 5v6.500M1 3.500l12 2.500M1 8.500l12 .5M1 13l12-1.500M1 16.500l15-3.500" fill="none" stroke="#444" stroke-width="1"/><path d="M1 1l12 4" stroke="#444"/></svg>
<svg style="left:55px;top:291px" width="3" height="3"><path d="M3 0v3h-3z" fill="#111"/></svg>
<div class="a" style="left:8px;top:297px;width:53px;height:1px;background:#f2f2f2"></div><div class="a" style="left:8px;top:296px;width:53px;height:1px;background:#bdbdbd"></div>
<svg style="left:14px;top:302px" width="17" height="13"><rect x=".7" y=".7" width="15.600" height="11.600" fill="#f2f2f2" stroke="#222" stroke-width="1.200"/><path d="M1 5c4-3 7 3 15-1M1 9c5 2 8-3 15 0M5.500 1c2 4-1 7 1 11M11 1c-2 4 2 7 0 11" fill="none" stroke="#333" stroke-width=".9"/></svg>
<div class="a" style="left:39px;top:303px;width:16px;height:12px;border:1px solid #222;background:linear-gradient(90deg,#fff,#111);box-shadow:1px 1px 1px rgba(0,0,0,.25)"></div>
<svg style="left:14px;top:321px" width="17" height="17"><path d="M1 16l1-2.500 7.500-7.500 1.500 1.500-7.500 7.500z" fill="#eee" stroke="#222" stroke-width="1"/><path d="M9 4.500l3.500 3.500M10.500 5.500l3-3c1-1 3 1 2 2l-3 3" fill="#444" stroke="#222" stroke-width="1.300"/></svg>
<svg style="left:30px;top:336px" width="3" height="3"><path d="M3 0v3h-3z" fill="#111"/></svg>
<svg style="left:38px;top:321px" width="18" height="17"><rect x=".7" y=".7" width="5.600" height="5.600" fill="#e8e8e8" stroke="#555"/><circle cx="13.500" cy="12.500" r="3.300" fill="#eee" stroke="#555"/><g fill="#666"><rect x="8" y="3" width="1" height="1"/><rect x="10" y="4" width="1" height="1"/><rect x="12" y="5" width="1" height="1"/><rect x="3" y="8" width="1" height="1"/><rect x="5" y="9" width="1" height="1"/><rect x="7" y="10" width="1" height="1"/><rect x="8" y="6" width="1" height="1"/><rect x="10" y="7" width="1" height="1"/><rect x="6" y="7" width="1" height="1"/><rect x="11" y="2" width="1" height="1"/></g></svg>
<div class="a" style="left:8px;top:341px;width:53px;height:1px;background:#f2f2f2"></div><div class="a" style="left:8px;top:340px;width:53px;height:1px;background:#bdbdbd"></div>
<svg style="left:12px;top:346px" width="17" height="18"><rect x="6.500" y="5.500" width="9" height="11.500" rx="1" fill="#eee" stroke="#222" stroke-width="1.200"/><rect x="9" y="2" width="4" height="3.500" fill="#ccc" stroke="#222"/><circle cx="11" cy="11.500" r="2.600" fill="#bbb" stroke="#222"/><circle cx="11" cy="11.500" r="1" fill="#222"/><g fill="#222"><rect x="1" y="1" width="1" height="1"/><rect x="3" y="2" width="1" height="1"/><rect x="5" y="3" width="1" height="1"/><rect x="1" y="3" width="1" height="1"/><rect x="3" y="4" width="1" height="1"/><rect x="1" y="5" width="1" height="1"/><rect x="5" y="1" width="1" height="1"/></g></svg>
<svg style="left:30px;top:361px" width="3" height="3"><path d="M3 0v3h-3z" fill="#111"/></svg>
<svg style="left:38px;top:347px" width="17" height="16"><path d="M1 0v14.500h15.500" fill="none" stroke="#333" stroke-width="1.200"/><rect x="2.500" y="7" width="3.500" height="7" fill="#666" stroke="#333" stroke-width=".8"/><rect x="7.500" y="5" width="3.500" height="9" fill="#888" stroke="#333" stroke-width=".8"/><rect x="12.500" y="2.500" width="3" height="11.500" fill="#ddd" stroke="#333" stroke-width=".8"/></svg>
<svg style="left:55px;top:361px" width="3" height="3"><path d="M3 0v3h-3z" fill="#111"/></svg>
<div class="a" style="left:8px;top:367px;width:53px;height:1px;background:#f2f2f2"></div><div class="a" style="left:8px;top:366px;width:53px;height:1px;background:#bdbdbd"></div>
<svg style="left:13px;top:372px" width="18" height="17"><rect x="4" y="3.500" width="9.500" height="9.500" fill="none" stroke="#111" stroke-width="1.500"/><path d="M0 3.500h18M0 13h18M4 0v17M13.500 0v17" stroke="#8a8a8a" stroke-width=".8" stroke-dasharray="2 1.500"/></svg>
<svg style="left:37px;top:372px" width="19" height="16"><path d="M1 15c4-1 8-4 11-8l5.500-6.500c-3 1.500-6 4-8 7s-5 6-8.500 7.500z" fill="#999" stroke="#222" stroke-width="1"/><path d="M7.500 3l5 4.500" stroke="#111" stroke-width="1.400"/></svg>
<svg style="left:55px;top:386px" width="3" height="3"><path d="M3 0v3h-3z" fill="#111"/></svg>
<svg style="left:13px;top:392px" width="16" height="18"><path d="M3.500 9V4.500c0-1.500 2-1.500 2 0V3c0-1.500 2-1.500 2 0v.5c0-1.500 2-1.500 2 0v1c0-1.300 2-1.300 2 0v6c0 3-1 4.500-2 6.500h-5.500c-1-2-3-4-4.500-6-1-1.500.5-2.500 1.500-1.500z" fill="#fff" stroke="#333" stroke-width="1.100"/><path d="M5.500 4.500v4M7.500 3.500v5M9.500 4.500v4" stroke="#333" stroke-width=".8"/></svg>
<svg style="left:30px;top:407px" width="3" height="3"><path d="M3 0v3h-3z" fill="#111"/></svg>
<svg style="left:38px;top:393px" width="17" height="17"><circle cx="6" cy="6" r="4.700" fill="#e4e4e4" stroke="#333" stroke-width="1.400"/><path d="M9.500 9.500l6 5.500" stroke="#222" stroke-width="2.400" stroke-linecap="round"/></svg>
<div class="a" style="left:8px;top:413px;width:53px;height:1px;background:#f2f2f2"></div><div class="a" style="left:8px;top:412px;width:53px;height:1px;background:#bdbdbd"></div>
<svg style="left:13px;top:417px" width="18" height="18"><path d="M12.500 1.500l4 4-11 11-4.500-.5.500-3.500z" fill="#fff" stroke="#111" stroke-width="1.400" stroke-linejoin="round"/><path d="M10.500 3.500l4 4" stroke="#111"/><circle cx="13.500" cy="4.500" r="1" fill="none" stroke="#111" stroke-width=".8"/></svg>
<div class="a" style="left:8px;top:438px;width:53px;height:1px;background:#f2f2f2"></div><div class="a" style="left:8px;top:437px;width:53px;height:1px;background:#bdbdbd"></div>
<!-- fill / stroke -->
<div class="a" style="left:27px;top:458px;width:29px;height:29px;background:#fff;border:1px solid #111"></div>
<div class="a" style="left:35px;top:466px;width:13px;height:13px;background:#e6c8cc;border:1px solid #111"></div>
<svg style="left:28px;top:459px" width="27" height="27"><path d="M0 27L27 0" stroke="#b5083c" stroke-width="2.400"/></svg>
<div class="a" style="left:13px;top:444px;width:29px;height:29px;background:#7b7b6f;border:1px solid #111;box-shadow:inset 0 0 0 1px #f4f4f4"></div>
<svg style="left:47px;top:443px" width="11" height="11"><path d="M2.500 3.500c3-1.500 5.500 1 5 4.500" fill="none" stroke="#111" stroke-width="1.400"/><path d="M0 3.500l3.500-3 .5 4.500z" fill="#111"/><path d="M5 7.500l5-.5-2.500 3.800z" fill="#111"/></svg>
<div class="a" style="left:18px;top:480px;width:7px;height:7px;background:#111"></div>
<div class="a" style="left:14px;top:476px;width:8px;height:8px;background:#fff;border:1px solid #111"></div>
<div class="a" style="left:8px;top:493px;width:53px;height:1px;background:#f2f2f2"></div><div class="a" style="left:8px;top:492px;width:53px;height:1px;background:#bdbdbd"></div>
<div class="a" style="left:9px;top:495px;width:16px;height:14px;border:1px solid #5a5a5a;border-radius:3px;background:#a6a6a6;box-shadow:inset 0 1px 2px rgba(0,0,0,.3)"></div>
<div class="a" style="left:12px;top:498px;width:10px;height:8px;background:#858585"></div>
<div class="a" style="left:29px;top:498px;width:10px;height:9px;background:linear-gradient(90deg,#fff,#6a6a6a);border:1px solid #aaa"></div>
<div class="a" style="left:47px;top:497px;width:10px;height:10px;background:#fff;border:1px solid #bbb"></div>
<svg style="left:47px;top:497px" width="10" height="10"><path d="M0 10L10 0" stroke="#b5083c" stroke-width="1.800"/></svg>
<div class="a" style="left:8px;top:512px;width:53px;height:1px;background:#f2f2f2"></div><div class="a" style="left:8px;top:511px;width:53px;height:1px;background:#bdbdbd"></div>
<div class="a" style="left:10px;top:514px;width:16px;height:16px;border:1px solid #5a5a5a;border-radius:3px;background:#bdbdbd;box-shadow:inset 0 1px 2px rgba(0,0,0,.3)"></div>
<svg style="left:12px;top:516px" width="13" height="13"><rect x="6" y="6" width="6.500" height="6.500" fill="#666" stroke="#333"/><circle cx="5.500" cy="5.500" r="4.700" fill="#f2f2f2" stroke="#333"/><rect x="6.500" y="6.500" width="5.500" height="5.500" fill="#777" opacity=".0"/></svg>
<svg style="left:28px;top:516px" width="13" height="13"><rect x="6" y="6" width="6.500" height="6.500" fill="#666" stroke="#333"/><circle cx="5.500" cy="5.500" r="4.700" fill="#f2f2f2" stroke="#333"/></svg>
<svg style="left:45px;top:516px" width="12" height="12"><circle cx="5.500" cy="5.500" r="4.700" fill="#f2f2f2" stroke="#333"/><path d="M5.500 5.500h4.700a4.700 4.700 0 0 1-4.700 4.700z" fill="#555"/></svg>
<div class="a" style="left:8px;top:533px;width:53px;height:1px;background:#f2f2f2"></div><div class="a" style="left:8px;top:532px;width:53px;height:1px;background:#bdbdbd"></div>
<div class="a" style="left:24px;top:543px;width:13px;height:9px;background:linear-gradient(#fff,#dedede);box-shadow:0 1px 0 #111,1px 0 0 #555"></div>
<div class="a" style="left:31px;top:537px;width:14px;height:11px;background:linear-gradient(#8a8a8a 0,#fff 28%,#e8e8e8);box-shadow:0 1px 0 #111,1px 0 0 #555"></div>
<!-- SECTIONS -->
</body>
</html>
